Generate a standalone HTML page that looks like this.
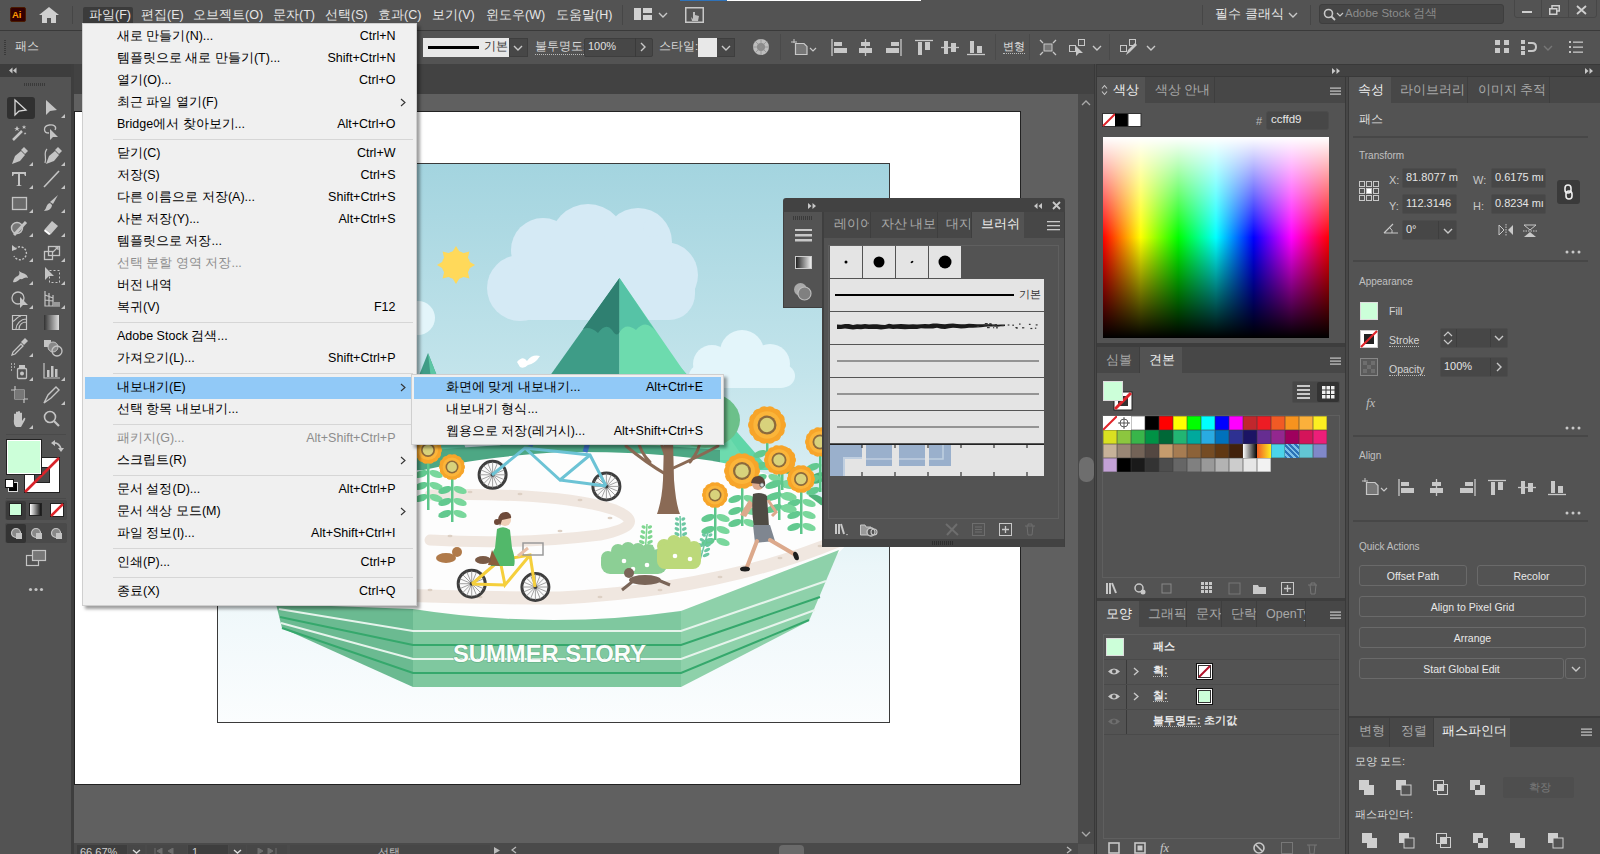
<!DOCTYPE html>
<html><head><meta charset="utf-8">
<style>
*{box-sizing:border-box;margin:0;padding:0}
html,body{width:1600px;height:854px;overflow:hidden;background:#535353;font-family:"Liberation Sans",sans-serif;color:#dcdcdc;font-size:12px}
.a{position:absolute}
.t{position:absolute;white-space:nowrap;line-height:1}
/* menu */
.menu{position:absolute;background:#f0f0f0;box-shadow:3px 3px 3px rgba(0,0,0,.38);border:1px solid #cfcfcf}
.mi{position:absolute;left:0;right:0;height:22px;color:#000;font-size:12.5px}
.mi .l{position:absolute;left:34px;top:5px;white-space:nowrap}
.mi .r{position:absolute;right:21px;top:5px;white-space:nowrap}
.mi .ar{position:absolute;right:9px;top:4px}
.mi.dis{color:#8a8a8a}
.msep{position:absolute;left:30px;right:3px;height:1px;background:#d5d5d5}
.hl{background:#91c9f7}
</style></head><body>


<!-- menu bar -->
<div class="a" style="left:0;top:0;width:1600px;height:30px;background:#535353"></div>
<div class="a" style="left:0;top:30px;width:1600px;height:1px;background:#3a3a3a"></div>
<!-- control bar -->
<div class="a" style="left:0;top:31px;width:1600px;height:33px;background:#535353"></div>
<!-- toolbar -->
<div class="a" style="left:0;top:64px;width:71px;height:790px;background:#535353"></div>
<div class="a" style="left:0;top:64px;width:71px;height:13px;background:#3d3d3d"></div>
<div class="a" style="left:71px;top:64px;width:3px;height:790px;background:#3e3e3e"></div>
<!-- doc tab strip -->
<div class="a" style="left:74px;top:64px;width:1021px;height:30px;background:#424242"></div>
<!-- pasteboard -->
<div class="a" style="left:74px;top:94px;width:1004px;height:750px;background:#606060"></div>
<!-- scrollbar v -->
<div class="a" style="left:1078px;top:94px;width:16px;height:750px;background:#4a4a4a"></div>
<!-- status bar -->
<div class="a" style="left:74px;top:844px;width:1021px;height:10px;background:#535353"></div>
<!-- artboard -->
<div class="a" style="left:74px;top:111px;width:947px;height:674px;background:#fff;border:1px solid #222"></div>
<!-- panel dividers -->
<div class="a" style="left:1094px;top:64px;width:3px;height:790px;background:#474747;border-left:1px solid #393939;border-right:1px solid #393939"></div>
<div class="a" style="left:1345px;top:77px;width:4px;height:777px;background:#474747;border-left:1px solid #393939;border-right:1px solid #3a3a3a"></div>
<div class="a" style="left:1097px;top:64px;width:248px;height:13px;background:#3d3d3d"></div>
<div class="a" style="left:1349px;top:64px;width:251px;height:13px;background:#3d3d3d"></div>


<!-- scrollbar details -->
<svg class="a" style="left:1081px;top:100px" width="10" height="6"><path d="M1,5 L5,1 L9,5" stroke="#aaa" stroke-width="1.3" fill="none"/></svg>
<svg class="a" style="left:1081px;top:831px" width="10" height="6"><path d="M1,1 L5,5 L9,1" stroke="#aaa" stroke-width="1.3" fill="none"/></svg>
<div class="a" style="left:1079px;top:457px;width:15px;height:25px;background:#6e6e6e;border-radius:7px"></div>
<!-- status bar -->
<div class="a" style="left:74px;top:843px;width:1004px;height:11px;background:#4a4a4a"></div>
<div class="a" style="left:77px;top:845px;width:50px;height:9px;background:#3e3e3e"></div>
<div class="t" style="left:80px;top:847px;font-size:11px;color:#d0d0d0">66.67%</div>
<div class="a" style="left:128px;top:845px;width:17px;height:9px;background:#474747"></div>
<div class="a" style="left:147px;top:845px;width:40px;height:9px;background:#474747"></div>
<div class="a" style="left:188px;top:845px;width:40px;height:9px;background:#3e3e3e"></div>
<div class="t" style="left:192px;top:847px;font-size:11px;color:#d0d0d0">1</div>
<div class="a" style="left:229px;top:845px;width:17px;height:9px;background:#474747"></div>
<div class="a" style="left:247px;top:845px;width:40px;height:9px;background:#474747"></div>
<div class="a" style="left:290px;top:845px;width:200px;height:9px;background:#474747"></div>
<div class="t" style="left:378px;top:847px;font-size:11px;color:#c0c0c0">선택</div>
<svg class="a" style="left:494px;top:847px" width="6" height="7"><path d="M0,0 L6,3.5 L0,7Z" fill="#bbb"/></svg>
<svg class="a" style="left:511px;top:846px" width="6" height="8"><path d="M5,1 L1,4 L5,7" stroke="#bbb" stroke-width="1.3" fill="none"/></svg>
<svg class="a" style="left:1066px;top:846px" width="6" height="8"><path d="M1,1 L5,4 L1,7" stroke="#bbb" stroke-width="1.3" fill="none"/></svg>
<div class="a" style="left:779px;top:845px;width:25px;height:9px;background:#6a6a6a;border-radius:4px 4px 0 0"></div>
<svg class="a" style="left:132px;top:849px" width="9" height="5"><path d="M1,1 L4.5,4 L8,1" stroke="#ddd" stroke-width="1.4" fill="none"/></svg>
<svg class="a" style="left:233px;top:849px" width="9" height="5"><path d="M1,1 L4.5,4 L8,1" stroke="#ddd" stroke-width="1.4" fill="none"/></svg>
<svg class="a" style="left:154px;top:848px" width="22" height="6"><path d="M1,0 L1,6 M8,0 L3,3 L8,6Z M19,0 L14,3 L19,6Z" stroke="#6e6e6e" fill="#6e6e6e"/></svg>
<svg class="a" style="left:256px;top:848px" width="22" height="6"><path d="M2,0 L7,3 L2,6Z M12,0 L17,3 L12,6Z M20,0 L20,6" stroke="#6e6e6e" fill="#6e6e6e"/></svg>
<div class="a" style="left:680px;top:0;width:47px;height:1px;background:#2f72b8"></div>
<div class="a" style="left:727px;top:0;width:194px;height:1px;background:#fff"></div>

<svg class="a" style="left:217px;top:163px" width="673" height="560" viewBox="217 163 673 560">
<defs><linearGradient id="sky" x1="0" y1="0" x2="0" y2="1">
<stop offset="0" stop-color="#a3d4df"/><stop offset="0.38" stop-color="#c3e4eb"/><stop offset="0.72" stop-color="#ebf6f9"/><stop offset="1" stop-color="#fbfdfe"/></linearGradient></defs>
<rect x="217" y="163" width="673" height="560" fill="url(#sky)"/>
<g fill="#ffd95a">
<path d="M475.0,265.0 L468.3,260.9 L468.3,269.1Z"/>
<path d="M469.4,278.4 L467.6,270.8 L461.8,276.6Z"/>
<path d="M456.0,284.0 L460.1,277.3 L451.9,277.3Z"/>
<path d="M442.6,278.4 L450.2,276.6 L444.4,270.8Z"/>
<path d="M437.0,265.0 L443.7,269.1 L443.7,260.9Z"/>
<path d="M442.6,251.6 L444.4,259.2 L450.2,253.4Z"/>
<path d="M456.0,246.0 L451.9,252.7 L460.1,252.7Z"/>
<path d="M469.4,251.6 L461.8,253.4 L467.6,259.2Z"/>
<circle cx="456" cy="265" r="14"/></g>
<g fill="#d5eaf5">
<circle cx="520" cy="288" r="33"/>
<circle cx="543" cy="250" r="32"/>
<circle cx="588" cy="242" r="38"/>
<circle cx="638" cy="242" r="34"/>
<circle cx="665" cy="275" r="33"/>
<circle cx="652" cy="228" r="9"/>
<circle cx="545" cy="290" r="30"/>
<rect x="505" y="262" width="190" height="58" rx="26"/>
</g>
<g fill="#e3f5fa">
<circle cx="712" cy="364" r="19"/>
<circle cx="742" cy="352" r="22"/>
<circle cx="770" cy="364" r="20"/>
<circle cx="700" cy="376" r="11"/>
<circle cx="784" cy="376" r="11"/>
<rect x="692" y="364" width="100" height="24" rx="11"/>
<circle cx="418" cy="318" r="17"/></g>
<polygon points="428,353 385,460 470,460" fill="#3f9c86"/>
<polygon points="428,353 470,460 440,460" fill="#5cc6a4"/>
<polygon points="670,355 560,470 770,470" fill="#5fd6a8"/>
<polygon points="619.5,278 490,460 619.5,460" fill="#3e9c87"/>
<polygon points="619.5,278 745,460 619.5,460" fill="#6ddbae"/>
<path d="M619.5,278 L583,329 Q590,326 598,333 Q606,322 612,330 Q617,338 619.5,332 Z" fill="#2f8071"/>
<path d="M619.5,278 L619.5,332 Q626,322 636,330 Q646,318 656,332 Z" fill="#56c3a6"/>
<path d="M517,362 q6,-7 10,-1 q5,-7 13,-5 q-5,8 -12,9 q-4,4 -8,2 z" fill="#fff"/>
<ellipse cx="705" cy="420" rx="35" ry="28" fill="#6cc08a"/>
<ellipse cx="640" cy="425" rx="55" ry="22" fill="#74c98f"/>
<path d="M417,452 Q560,436 720,450 L720,470 L417,470 Z" fill="#4da784"/>
<g fill="#4fb27a"><ellipse cx="818" cy="478" rx="9" ry="5" transform="rotate(-20 818 478)"/><ellipse cx="816" cy="500" rx="9" ry="5" transform="rotate(20 816 500)"/><ellipse cx="790" cy="470" rx="8" ry="4"/></g>
<path d="M260,600 Q270,470 560,452 Q740,450 800,490 Q845,520 850,540 Q800,610 560,622 Q330,625 260,600 Z" fill="#fdfdfd"/>
<path d="M430,495 Q560,492 615,510 Q650,525 600,535 Q520,545 430,540" fill="none" stroke="#f0e7e0" stroke-width="11" stroke-linecap="round"/>
<path d="M300,590 Q420,598 560,598 Q720,590 840,540" fill="none" stroke="#f0e7e0" stroke-width="13"/>
<ellipse cx="470" cy="492" rx="2.5" ry="1.2" fill="#ddd0c4"/><ellipse cx="520" cy="494" rx="2.5" ry="1.2" fill="#ddd0c4"/><ellipse cx="580" cy="500" rx="2.5" ry="1.2" fill="#ddd0c4"/><ellipse cx="610" cy="518" rx="2.5" ry="1.2" fill="#ddd0c4"/><ellipse cx="560" cy="531" rx="2.5" ry="1.2" fill="#ddd0c4"/><ellipse cx="500" cy="535" rx="2.5" ry="1.2" fill="#ddd0c4"/><ellipse cx="450" cy="536" rx="2.5" ry="1.2" fill="#ddd0c4"/><ellipse cx="430" cy="590" rx="2.5" ry="1.2" fill="#ddd0c4"/><ellipse cx="480" cy="597" rx="2.5" ry="1.2" fill="#ddd0c4"/><ellipse cx="540" cy="598" rx="2.5" ry="1.2" fill="#ddd0c4"/><ellipse cx="600" cy="597" rx="2.5" ry="1.2" fill="#ddd0c4"/><ellipse cx="660" cy="590" rx="2.5" ry="1.2" fill="#ddd0c4"/><ellipse cx="720" cy="577" rx="2.5" ry="1.2" fill="#ddd0c4"/><ellipse cx="780" cy="558" rx="2.5" ry="1.2" fill="#ddd0c4"/><ellipse cx="820" cy="546" rx="2.5" ry="1.2" fill="#ddd0c4"/>
<path d="M664,440 L673,440 L674,480 Q676,505 680,514 L657,514 Q662,500 663,480 Z" fill="#8a6a55"/>
<path d="M667,475 Q645,462 626,446 M669,470 Q700,456 718,446 M650,462 Q640,452 638,440 M690,462 Q700,450 700,440 M668,462 L660,440" stroke="#8a6a55" stroke-width="3" fill="none" stroke-linecap="round"/>
<rect x="427" y="462" width="2.5" height="48" fill="#5cc68a"/><ellipse cx="421" cy="474" rx="7" ry="3.5" fill="#62c98f" transform="rotate(-20 421 474)"/><ellipse cx="436" cy="474" rx="7" ry="3.5" fill="#79d79c" transform="rotate(20 436 474)"/><ellipse cx="421" cy="486" rx="7" ry="3.5" fill="#62c98f" transform="rotate(-20 421 486)"/><ellipse cx="436" cy="486" rx="7" ry="3.5" fill="#79d79c" transform="rotate(20 436 486)"/><ellipse cx="421" cy="498" rx="7" ry="3.5" fill="#62c98f" transform="rotate(-20 421 498)"/><ellipse cx="436" cy="498" rx="7" ry="3.5" fill="#79d79c" transform="rotate(20 436 498)"/>
<rect x="451" y="478" width="2.5" height="44" fill="#5cc68a"/><ellipse cx="445" cy="490" rx="7" ry="3.5" fill="#62c98f" transform="rotate(-20 445 490)"/><ellipse cx="460" cy="490" rx="7" ry="3.5" fill="#79d79c" transform="rotate(20 460 490)"/><ellipse cx="445" cy="502" rx="7" ry="3.5" fill="#62c98f" transform="rotate(-20 445 502)"/><ellipse cx="460" cy="502" rx="7" ry="3.5" fill="#79d79c" transform="rotate(20 460 502)"/><ellipse cx="445" cy="514" rx="7" ry="3.5" fill="#62c98f" transform="rotate(-20 445 514)"/><ellipse cx="460" cy="514" rx="7" ry="3.5" fill="#79d79c" transform="rotate(20 460 514)"/>
<rect x="741" y="487" width="2.5" height="39" fill="#5cc68a"/><ellipse cx="735" cy="499" rx="7" ry="3.5" fill="#62c98f" transform="rotate(-20 735 499)"/><ellipse cx="750" cy="499" rx="7" ry="3.5" fill="#79d79c" transform="rotate(20 750 499)"/><ellipse cx="735" cy="511" rx="7" ry="3.5" fill="#62c98f" transform="rotate(-20 735 511)"/><ellipse cx="750" cy="511" rx="7" ry="3.5" fill="#79d79c" transform="rotate(20 750 511)"/><ellipse cx="735" cy="523" rx="7" ry="3.5" fill="#62c98f" transform="rotate(-20 735 523)"/><ellipse cx="750" cy="523" rx="7" ry="3.5" fill="#79d79c" transform="rotate(20 750 523)"/>
<rect x="778" y="473" width="2.5" height="47" fill="#5cc68a"/><ellipse cx="772" cy="485" rx="7" ry="3.5" fill="#62c98f" transform="rotate(-20 772 485)"/><ellipse cx="787" cy="485" rx="7" ry="3.5" fill="#79d79c" transform="rotate(20 787 485)"/><ellipse cx="772" cy="497" rx="7" ry="3.5" fill="#62c98f" transform="rotate(-20 772 497)"/><ellipse cx="787" cy="497" rx="7" ry="3.5" fill="#79d79c" transform="rotate(20 787 497)"/><ellipse cx="772" cy="509" rx="7" ry="3.5" fill="#62c98f" transform="rotate(-20 772 509)"/><ellipse cx="787" cy="509" rx="7" ry="3.5" fill="#79d79c" transform="rotate(20 787 509)"/>
<rect x="800" y="491" width="2.5" height="43" fill="#5cc68a"/><ellipse cx="794" cy="503" rx="7" ry="3.5" fill="#62c98f" transform="rotate(-20 794 503)"/><ellipse cx="809" cy="503" rx="7" ry="3.5" fill="#79d79c" transform="rotate(20 809 503)"/><ellipse cx="794" cy="515" rx="7" ry="3.5" fill="#62c98f" transform="rotate(-20 794 515)"/><ellipse cx="809" cy="515" rx="7" ry="3.5" fill="#79d79c" transform="rotate(20 809 515)"/><ellipse cx="794" cy="527" rx="7" ry="3.5" fill="#62c98f" transform="rotate(-20 794 527)"/><ellipse cx="809" cy="527" rx="7" ry="3.5" fill="#79d79c" transform="rotate(20 809 527)"/>
<rect x="714" y="506" width="2.5" height="34" fill="#5cc68a"/><ellipse cx="708" cy="518" rx="7" ry="3.5" fill="#62c98f" transform="rotate(-20 708 518)"/><ellipse cx="723" cy="518" rx="7" ry="3.5" fill="#79d79c" transform="rotate(20 723 518)"/><ellipse cx="708" cy="530" rx="7" ry="3.5" fill="#62c98f" transform="rotate(-20 708 530)"/><ellipse cx="723" cy="530" rx="7" ry="3.5" fill="#79d79c" transform="rotate(20 723 530)"/><ellipse cx="708" cy="542" rx="7" ry="3.5" fill="#62c98f" transform="rotate(-20 708 542)"/><ellipse cx="723" cy="542" rx="7" ry="3.5" fill="#79d79c" transform="rotate(20 723 542)"/>
<rect x="766" y="442" width="2.5" height="23" fill="#5cc68a"/><ellipse cx="760" cy="454" rx="7" ry="3.5" fill="#62c98f" transform="rotate(-20 760 454)"/><ellipse cx="775" cy="454" rx="7" ry="3.5" fill="#79d79c" transform="rotate(20 775 454)"/><ellipse cx="760" cy="466" rx="7" ry="3.5" fill="#62c98f" transform="rotate(-20 760 466)"/><ellipse cx="775" cy="466" rx="7" ry="3.5" fill="#79d79c" transform="rotate(20 775 466)"/><ellipse cx="760" cy="478" rx="7" ry="3.5" fill="#62c98f" transform="rotate(-20 760 478)"/><ellipse cx="775" cy="478" rx="7" ry="3.5" fill="#79d79c" transform="rotate(20 775 478)"/>
<rect x="819" y="455" width="2.5" height="37" fill="#5cc68a"/><ellipse cx="813" cy="467" rx="7" ry="3.5" fill="#62c98f" transform="rotate(-20 813 467)"/><ellipse cx="828" cy="467" rx="7" ry="3.5" fill="#79d79c" transform="rotate(20 828 467)"/><ellipse cx="813" cy="479" rx="7" ry="3.5" fill="#62c98f" transform="rotate(-20 813 479)"/><ellipse cx="828" cy="479" rx="7" ry="3.5" fill="#79d79c" transform="rotate(20 828 479)"/><ellipse cx="813" cy="491" rx="7" ry="3.5" fill="#62c98f" transform="rotate(-20 813 491)"/><ellipse cx="828" cy="491" rx="7" ry="3.5" fill="#79d79c" transform="rotate(20 828 491)"/>
<rect x="781" y="472" width="2.5" height="18" fill="#5cc68a"/><ellipse cx="775" cy="484" rx="7" ry="3.5" fill="#62c98f" transform="rotate(-20 775 484)"/><ellipse cx="790" cy="484" rx="7" ry="3.5" fill="#79d79c" transform="rotate(20 790 484)"/><ellipse cx="775" cy="496" rx="7" ry="3.5" fill="#62c98f" transform="rotate(-20 775 496)"/><ellipse cx="790" cy="496" rx="7" ry="3.5" fill="#79d79c" transform="rotate(20 790 496)"/><ellipse cx="775" cy="508" rx="7" ry="3.5" fill="#62c98f" transform="rotate(-20 775 508)"/><ellipse cx="790" cy="508" rx="7" ry="3.5" fill="#79d79c" transform="rotate(20 790 508)"/>
<circle cx="437.5" cy="450.0" r="4.5" fill="#f7a52a"/><circle cx="436.6" cy="454.1" r="4.5" fill="#f7a52a"/><circle cx="433.9" cy="457.4" r="4.5" fill="#f7a52a"/><circle cx="430.1" cy="459.3" r="4.5" fill="#f7a52a"/><circle cx="425.9" cy="459.3" r="4.5" fill="#f7a52a"/><circle cx="422.1" cy="457.4" r="4.5" fill="#f7a52a"/><circle cx="419.4" cy="454.1" r="4.5" fill="#f7a52a"/><circle cx="418.5" cy="450.0" r="4.5" fill="#f7a52a"/><circle cx="419.4" cy="445.9" r="4.5" fill="#f7a52a"/><circle cx="422.1" cy="442.6" r="4.5" fill="#f7a52a"/><circle cx="425.9" cy="440.7" r="4.5" fill="#f7a52a"/><circle cx="430.1" cy="440.7" r="4.5" fill="#f7a52a"/><circle cx="433.9" cy="442.6" r="4.5" fill="#f7a52a"/><circle cx="436.6" cy="445.9" r="4.5" fill="#f7a52a"/><circle cx="428" cy="450" r="10.1" fill="#fbb53a"/><circle cx="428" cy="450" r="7.0" fill="#8c6a3c"/><circle cx="428" cy="450" r="5.3" fill="#d8d27c"/>
<circle cx="460.8" cy="467.0" r="4.2" fill="#f7a52a"/><circle cx="460.0" cy="470.8" r="4.2" fill="#f7a52a"/><circle cx="457.5" cy="473.9" r="4.2" fill="#f7a52a"/><circle cx="454.0" cy="475.6" r="4.2" fill="#f7a52a"/><circle cx="450.0" cy="475.6" r="4.2" fill="#f7a52a"/><circle cx="446.5" cy="473.9" r="4.2" fill="#f7a52a"/><circle cx="444.0" cy="470.8" r="4.2" fill="#f7a52a"/><circle cx="443.2" cy="467.0" r="4.2" fill="#f7a52a"/><circle cx="444.0" cy="463.2" r="4.2" fill="#f7a52a"/><circle cx="446.5" cy="460.1" r="4.2" fill="#f7a52a"/><circle cx="450.0" cy="458.4" r="4.2" fill="#f7a52a"/><circle cx="454.0" cy="458.4" r="4.2" fill="#f7a52a"/><circle cx="457.5" cy="460.1" r="4.2" fill="#f7a52a"/><circle cx="460.0" cy="463.2" r="4.2" fill="#f7a52a"/><circle cx="452" cy="467" r="9.4" fill="#fbb53a"/><circle cx="452" cy="467" r="6.5" fill="#8c6a3c"/><circle cx="452" cy="467" r="4.9" fill="#d8d27c"/>
<circle cx="779.9" cy="425.0" r="6.1" fill="#f7a52a"/><circle cx="778.6" cy="430.6" r="6.1" fill="#f7a52a"/><circle cx="775.1" cy="435.1" r="6.1" fill="#f7a52a"/><circle cx="769.9" cy="437.6" r="6.1" fill="#f7a52a"/><circle cx="764.1" cy="437.6" r="6.1" fill="#f7a52a"/><circle cx="758.9" cy="435.1" r="6.1" fill="#f7a52a"/><circle cx="755.4" cy="430.6" r="6.1" fill="#f7a52a"/><circle cx="754.1" cy="425.0" r="6.1" fill="#f7a52a"/><circle cx="755.4" cy="419.4" r="6.1" fill="#f7a52a"/><circle cx="758.9" cy="414.9" r="6.1" fill="#f7a52a"/><circle cx="764.1" cy="412.4" r="6.1" fill="#f7a52a"/><circle cx="769.9" cy="412.4" r="6.1" fill="#f7a52a"/><circle cx="775.1" cy="414.9" r="6.1" fill="#f7a52a"/><circle cx="778.6" cy="419.4" r="6.1" fill="#f7a52a"/><circle cx="767" cy="425" r="13.7" fill="#fbb53a"/><circle cx="767" cy="425" r="9.5" fill="#8c6a3c"/><circle cx="767" cy="425" r="7.2" fill="#d8d27c"/>
<circle cx="830.2" cy="442.0" r="4.8" fill="#f7a52a"/><circle cx="829.2" cy="446.4" r="4.8" fill="#f7a52a"/><circle cx="826.4" cy="450.0" r="4.8" fill="#f7a52a"/><circle cx="822.3" cy="451.9" r="4.8" fill="#f7a52a"/><circle cx="817.7" cy="451.9" r="4.8" fill="#f7a52a"/><circle cx="813.6" cy="450.0" r="4.8" fill="#f7a52a"/><circle cx="810.8" cy="446.4" r="4.8" fill="#f7a52a"/><circle cx="809.8" cy="442.0" r="4.8" fill="#f7a52a"/><circle cx="810.8" cy="437.6" r="4.8" fill="#f7a52a"/><circle cx="813.6" cy="434.0" r="4.8" fill="#f7a52a"/><circle cx="817.7" cy="432.1" r="4.8" fill="#f7a52a"/><circle cx="822.3" cy="432.1" r="4.8" fill="#f7a52a"/><circle cx="826.4" cy="434.0" r="4.8" fill="#f7a52a"/><circle cx="829.2" cy="437.6" r="4.8" fill="#f7a52a"/><circle cx="820" cy="442" r="10.8" fill="#fbb53a"/><circle cx="820" cy="442" r="7.5" fill="#8c6a3c"/><circle cx="820" cy="442" r="5.7" fill="#d8d27c"/>
<circle cx="791.5" cy="460.0" r="4.5" fill="#f7a52a"/><circle cx="790.6" cy="464.1" r="4.5" fill="#f7a52a"/><circle cx="787.9" cy="467.4" r="4.5" fill="#f7a52a"/><circle cx="784.1" cy="469.3" r="4.5" fill="#f7a52a"/><circle cx="779.9" cy="469.3" r="4.5" fill="#f7a52a"/><circle cx="776.1" cy="467.4" r="4.5" fill="#f7a52a"/><circle cx="773.4" cy="464.1" r="4.5" fill="#f7a52a"/><circle cx="772.5" cy="460.0" r="4.5" fill="#f7a52a"/><circle cx="773.4" cy="455.9" r="4.5" fill="#f7a52a"/><circle cx="776.1" cy="452.6" r="4.5" fill="#f7a52a"/><circle cx="779.9" cy="450.7" r="4.5" fill="#f7a52a"/><circle cx="784.1" cy="450.7" r="4.5" fill="#f7a52a"/><circle cx="787.9" cy="452.6" r="4.5" fill="#f7a52a"/><circle cx="790.6" cy="455.9" r="4.5" fill="#f7a52a"/><circle cx="782" cy="460" r="10.1" fill="#fbb53a"/><circle cx="782" cy="460" r="7.0" fill="#8c6a3c"/><circle cx="782" cy="460" r="5.3" fill="#d8d27c"/>
<circle cx="754.2" cy="471.0" r="5.8" fill="#f7a52a"/><circle cx="753.0" cy="476.3" r="5.8" fill="#f7a52a"/><circle cx="749.6" cy="480.6" r="5.8" fill="#f7a52a"/><circle cx="744.7" cy="482.9" r="5.8" fill="#f7a52a"/><circle cx="739.3" cy="482.9" r="5.8" fill="#f7a52a"/><circle cx="734.4" cy="480.6" r="5.8" fill="#f7a52a"/><circle cx="731.0" cy="476.3" r="5.8" fill="#f7a52a"/><circle cx="729.8" cy="471.0" r="5.8" fill="#f7a52a"/><circle cx="731.0" cy="465.7" r="5.8" fill="#f7a52a"/><circle cx="734.4" cy="461.4" r="5.8" fill="#f7a52a"/><circle cx="739.3" cy="459.1" r="5.8" fill="#f7a52a"/><circle cx="744.7" cy="459.1" r="5.8" fill="#f7a52a"/><circle cx="749.6" cy="461.4" r="5.8" fill="#f7a52a"/><circle cx="753.0" cy="465.7" r="5.8" fill="#f7a52a"/><circle cx="742" cy="471" r="13.0" fill="#fbb53a"/><circle cx="742" cy="471" r="9.0" fill="#8c6a3c"/><circle cx="742" cy="471" r="6.8" fill="#d8d27c"/>
<circle cx="789.2" cy="460.0" r="4.8" fill="#f7a52a"/><circle cx="788.2" cy="464.4" r="4.8" fill="#f7a52a"/><circle cx="785.4" cy="468.0" r="4.8" fill="#f7a52a"/><circle cx="781.3" cy="469.9" r="4.8" fill="#f7a52a"/><circle cx="776.7" cy="469.9" r="4.8" fill="#f7a52a"/><circle cx="772.6" cy="468.0" r="4.8" fill="#f7a52a"/><circle cx="769.8" cy="464.4" r="4.8" fill="#f7a52a"/><circle cx="768.8" cy="460.0" r="4.8" fill="#f7a52a"/><circle cx="769.8" cy="455.6" r="4.8" fill="#f7a52a"/><circle cx="772.6" cy="452.0" r="4.8" fill="#f7a52a"/><circle cx="776.7" cy="450.1" r="4.8" fill="#f7a52a"/><circle cx="781.3" cy="450.1" r="4.8" fill="#f7a52a"/><circle cx="785.4" cy="452.0" r="4.8" fill="#f7a52a"/><circle cx="788.2" cy="455.6" r="4.8" fill="#f7a52a"/><circle cx="779" cy="460" r="10.8" fill="#fbb53a"/><circle cx="779" cy="460" r="7.5" fill="#8c6a3c"/><circle cx="779" cy="460" r="5.7" fill="#d8d27c"/>
<circle cx="810.5" cy="479.0" r="4.5" fill="#f7a52a"/><circle cx="809.6" cy="483.1" r="4.5" fill="#f7a52a"/><circle cx="806.9" cy="486.4" r="4.5" fill="#f7a52a"/><circle cx="803.1" cy="488.3" r="4.5" fill="#f7a52a"/><circle cx="798.9" cy="488.3" r="4.5" fill="#f7a52a"/><circle cx="795.1" cy="486.4" r="4.5" fill="#f7a52a"/><circle cx="792.4" cy="483.1" r="4.5" fill="#f7a52a"/><circle cx="791.5" cy="479.0" r="4.5" fill="#f7a52a"/><circle cx="792.4" cy="474.9" r="4.5" fill="#f7a52a"/><circle cx="795.1" cy="471.6" r="4.5" fill="#f7a52a"/><circle cx="798.9" cy="469.7" r="4.5" fill="#f7a52a"/><circle cx="803.1" cy="469.7" r="4.5" fill="#f7a52a"/><circle cx="806.9" cy="471.6" r="4.5" fill="#f7a52a"/><circle cx="809.6" cy="474.9" r="4.5" fill="#f7a52a"/><circle cx="801" cy="479" r="10.1" fill="#fbb53a"/><circle cx="801" cy="479" r="7.0" fill="#8c6a3c"/><circle cx="801" cy="479" r="5.3" fill="#d8d27c"/>
<circle cx="723.8" cy="495.0" r="4.2" fill="#f7a52a"/><circle cx="723.0" cy="498.8" r="4.2" fill="#f7a52a"/><circle cx="720.5" cy="501.9" r="4.2" fill="#f7a52a"/><circle cx="717.0" cy="503.6" r="4.2" fill="#f7a52a"/><circle cx="713.0" cy="503.6" r="4.2" fill="#f7a52a"/><circle cx="709.5" cy="501.9" r="4.2" fill="#f7a52a"/><circle cx="707.0" cy="498.8" r="4.2" fill="#f7a52a"/><circle cx="706.2" cy="495.0" r="4.2" fill="#f7a52a"/><circle cx="707.0" cy="491.2" r="4.2" fill="#f7a52a"/><circle cx="709.5" cy="488.1" r="4.2" fill="#f7a52a"/><circle cx="713.0" cy="486.4" r="4.2" fill="#f7a52a"/><circle cx="717.0" cy="486.4" r="4.2" fill="#f7a52a"/><circle cx="720.5" cy="488.1" r="4.2" fill="#f7a52a"/><circle cx="723.0" cy="491.2" r="4.2" fill="#f7a52a"/><circle cx="715" cy="495" r="9.4" fill="#fbb53a"/><circle cx="715" cy="495" r="6.5" fill="#8c6a3c"/><circle cx="715" cy="495" r="4.9" fill="#d8d27c"/>
<path d="M645,556 Q646.0,540.0 647,524" stroke="#7fd690" stroke-width="1.5" fill="none"/><ellipse cx="643.6" cy="527.0" rx="2.2" ry="1.6" fill="#7fd690" transform="rotate(25 643.6 527.0)"/><ellipse cx="650.0" cy="527.0" rx="2.2" ry="1.6" fill="#7fd690" transform="rotate(-25 650.0 527.0)"/><ellipse cx="643.0" cy="532.0" rx="2.5" ry="1.6" fill="#7fd690" transform="rotate(25 643.0 532.0)"/><ellipse cx="650.0" cy="532.0" rx="2.5" ry="1.6" fill="#7fd690" transform="rotate(-25 650.0 532.0)"/><ellipse cx="642.4" cy="537.0" rx="2.8" ry="1.6" fill="#7fd690" transform="rotate(25 642.4 537.0)"/><ellipse cx="650.0" cy="537.0" rx="2.8" ry="1.6" fill="#7fd690" transform="rotate(-25 650.0 537.0)"/><ellipse cx="641.8" cy="542.0" rx="3.1" ry="1.6" fill="#7fd690" transform="rotate(25 641.8 542.0)"/><ellipse cx="650.0" cy="542.0" rx="3.1" ry="1.6" fill="#7fd690" transform="rotate(-25 650.0 542.0)"/><ellipse cx="641.1" cy="547.0" rx="3.4" ry="1.6" fill="#7fd690" transform="rotate(25 641.1 547.0)"/><ellipse cx="650.0" cy="547.0" rx="3.4" ry="1.6" fill="#7fd690" transform="rotate(-25 650.0 547.0)"/><ellipse cx="640.5" cy="552.0" rx="3.8" ry="1.6" fill="#7fd690" transform="rotate(25 640.5 552.0)"/><ellipse cx="650.0" cy="552.0" rx="3.8" ry="1.6" fill="#7fd690" transform="rotate(-25 650.0 552.0)"/>
<path d="M682,560 Q681.0,538.0 680,516" stroke="#6cc7a2" stroke-width="1.5" fill="none"/><ellipse cx="677.0" cy="519.0" rx="2.1" ry="1.6" fill="#6cc7a2" transform="rotate(25 677.0 519.0)"/><ellipse cx="683.3" cy="519.0" rx="2.1" ry="1.6" fill="#6cc7a2" transform="rotate(-25 683.3 519.0)"/><ellipse cx="677.0" cy="524.0" rx="2.4" ry="1.6" fill="#6cc7a2" transform="rotate(25 677.0 524.0)"/><ellipse cx="683.7" cy="524.0" rx="2.4" ry="1.6" fill="#6cc7a2" transform="rotate(-25 683.7 524.0)"/><ellipse cx="677.0" cy="529.0" rx="2.6" ry="1.6" fill="#6cc7a2" transform="rotate(25 677.0 529.0)"/><ellipse cx="684.2" cy="529.0" rx="2.6" ry="1.6" fill="#6cc7a2" transform="rotate(-25 684.2 529.0)"/><ellipse cx="677.0" cy="534.0" rx="2.8" ry="1.6" fill="#6cc7a2" transform="rotate(25 677.0 534.0)"/><ellipse cx="684.6" cy="534.0" rx="2.8" ry="1.6" fill="#6cc7a2" transform="rotate(-25 684.6 534.0)"/><ellipse cx="677.0" cy="539.0" rx="3.0" ry="1.6" fill="#6cc7a2" transform="rotate(25 677.0 539.0)"/><ellipse cx="685.1" cy="539.0" rx="3.0" ry="1.6" fill="#6cc7a2" transform="rotate(-25 685.1 539.0)"/><ellipse cx="677.0" cy="544.0" rx="3.3" ry="1.6" fill="#6cc7a2" transform="rotate(25 677.0 544.0)"/><ellipse cx="685.5" cy="544.0" rx="3.3" ry="1.6" fill="#6cc7a2" transform="rotate(-25 685.5 544.0)"/><ellipse cx="677.0" cy="549.0" rx="3.5" ry="1.6" fill="#6cc7a2" transform="rotate(25 677.0 549.0)"/><ellipse cx="686.0" cy="549.0" rx="3.5" ry="1.6" fill="#6cc7a2" transform="rotate(-25 686.0 549.0)"/><ellipse cx="677.0" cy="554.0" rx="3.7" ry="1.6" fill="#6cc7a2" transform="rotate(25 677.0 554.0)"/><ellipse cx="686.5" cy="554.0" rx="3.7" ry="1.6" fill="#6cc7a2" transform="rotate(-25 686.5 554.0)"/>
<path d="M700,560 Q704.0,546.0 708,532" stroke="#6cc7a2" stroke-width="1.5" fill="none"/><ellipse cx="703.9" cy="535.0" rx="2.2" ry="1.6" fill="#6cc7a2" transform="rotate(25 703.9 535.0)"/><ellipse cx="710.4" cy="535.0" rx="2.2" ry="1.6" fill="#6cc7a2" transform="rotate(-25 710.4 535.0)"/><ellipse cx="702.1" cy="540.0" rx="2.6" ry="1.6" fill="#6cc7a2" transform="rotate(25 702.1 540.0)"/><ellipse cx="709.3" cy="540.0" rx="2.6" ry="1.6" fill="#6cc7a2" transform="rotate(-25 709.3 540.0)"/><ellipse cx="700.4" cy="545.0" rx="2.9" ry="1.6" fill="#6cc7a2" transform="rotate(25 700.4 545.0)"/><ellipse cx="708.2" cy="545.0" rx="2.9" ry="1.6" fill="#6cc7a2" transform="rotate(-25 708.2 545.0)"/><ellipse cx="698.6" cy="550.0" rx="3.3" ry="1.6" fill="#6cc7a2" transform="rotate(25 698.6 550.0)"/><ellipse cx="707.1" cy="550.0" rx="3.3" ry="1.6" fill="#6cc7a2" transform="rotate(-25 707.1 550.0)"/><ellipse cx="696.8" cy="555.0" rx="3.6" ry="1.6" fill="#6cc7a2" transform="rotate(25 696.8 555.0)"/><ellipse cx="706.1" cy="555.0" rx="3.6" ry="1.6" fill="#6cc7a2" transform="rotate(-25 706.1 555.0)"/>
<g fill="#8ccf95"><circle cx="608" cy="558" r="7"/><circle cx="618" cy="551" r="7"/><circle cx="628" cy="549" r="7"/><circle cx="638" cy="550" r="7"/><circle cx="648" cy="551" r="7"/><circle cx="658" cy="556" r="7"/><circle cx="663" cy="564" r="6"/><rect x="601" y="552" width="66" height="22" rx="9"/></g>
<g fill="#bcd97a"><circle cx="664" cy="546" r="7"/><circle cx="674" cy="542" r="7"/><circle cx="684" cy="543" r="7"/><circle cx="694" cy="548" r="7"/><rect x="657" y="544" width="44" height="25" rx="8"/></g>
<circle cx="624" cy="561" r="2.3" fill="#fff"/><circle cx="647" cy="565" r="2.3" fill="#fff"/><circle cx="633" cy="569" r="2.3" fill="#fff"/><circle cx="675" cy="556" r="2.3" fill="#fff"/><circle cx="690" cy="559" r="2.3" fill="#fff"/>
<circle cx="492.6" cy="474.8" r="13.5" fill="#fafafa" stroke="#3e3e3e" stroke-width="3"/><line x1="505.6" y1="474.8" x2="479.6" y2="474.8" stroke="#8a8a8a" stroke-width="0.8"/><line x1="504.6" y1="479.8" x2="480.6" y2="469.8" stroke="#8a8a8a" stroke-width="0.8"/><line x1="501.8" y1="484.0" x2="483.4" y2="465.6" stroke="#8a8a8a" stroke-width="0.8"/><line x1="497.6" y1="486.8" x2="487.6" y2="462.8" stroke="#8a8a8a" stroke-width="0.8"/><line x1="492.6" y1="487.8" x2="492.6" y2="461.8" stroke="#8a8a8a" stroke-width="0.8"/><line x1="487.6" y1="486.8" x2="497.6" y2="462.8" stroke="#8a8a8a" stroke-width="0.8"/><line x1="483.4" y1="484.0" x2="501.8" y2="465.6" stroke="#8a8a8a" stroke-width="0.8"/><line x1="480.6" y1="479.8" x2="504.6" y2="469.8" stroke="#8a8a8a" stroke-width="0.8"/><circle cx="492.6" cy="474.8" r="2" fill="#3e3e3e"/><circle cx="606.4" cy="486.4" r="13.5" fill="#fafafa" stroke="#3e3e3e" stroke-width="3"/><line x1="619.4" y1="486.4" x2="593.4" y2="486.4" stroke="#8a8a8a" stroke-width="0.8"/><line x1="618.4" y1="491.4" x2="594.4" y2="481.4" stroke="#8a8a8a" stroke-width="0.8"/><line x1="615.6" y1="495.6" x2="597.2" y2="477.2" stroke="#8a8a8a" stroke-width="0.8"/><line x1="611.4" y1="498.4" x2="601.4" y2="474.4" stroke="#8a8a8a" stroke-width="0.8"/><line x1="606.4" y1="499.4" x2="606.4" y2="473.4" stroke="#8a8a8a" stroke-width="0.8"/><line x1="601.4" y1="498.4" x2="611.4" y2="474.4" stroke="#8a8a8a" stroke-width="0.8"/><line x1="597.2" y1="495.6" x2="615.6" y2="477.2" stroke="#8a8a8a" stroke-width="0.8"/><line x1="594.4" y1="491.4" x2="618.4" y2="481.4" stroke="#8a8a8a" stroke-width="0.8"/><circle cx="606.4" cy="486.4" r="2" fill="#3e3e3e"/>
<path d="M492,475 L525,448 L590,455 L606,486 M525,448 L560,480 L590,455 M560,480 L606,486" stroke="#6cc3d5" stroke-width="3" fill="none"/>
<path d="M530,446 L540,420 M585,452 L592,430" stroke="#3b6fc2" stroke-width="5"/>
<ellipse cx="592" cy="427" rx="10" ry="6" fill="#f2a2c4"/>
<circle cx="471.7" cy="583.7" r="13.5" fill="#fafafa" stroke="#3e3e3e" stroke-width="3"/><line x1="484.7" y1="583.7" x2="458.7" y2="583.7" stroke="#8a8a8a" stroke-width="0.8"/><line x1="483.7" y1="588.7" x2="459.7" y2="578.7" stroke="#8a8a8a" stroke-width="0.8"/><line x1="480.9" y1="592.9" x2="462.5" y2="574.5" stroke="#8a8a8a" stroke-width="0.8"/><line x1="476.7" y1="595.7" x2="466.7" y2="571.7" stroke="#8a8a8a" stroke-width="0.8"/><line x1="471.7" y1="596.7" x2="471.7" y2="570.7" stroke="#8a8a8a" stroke-width="0.8"/><line x1="466.7" y1="595.7" x2="476.7" y2="571.7" stroke="#8a8a8a" stroke-width="0.8"/><line x1="462.5" y1="592.9" x2="480.9" y2="574.5" stroke="#8a8a8a" stroke-width="0.8"/><line x1="459.7" y1="588.7" x2="483.7" y2="578.7" stroke="#8a8a8a" stroke-width="0.8"/><circle cx="471.7" cy="583.7" r="2" fill="#3e3e3e"/><circle cx="535.4" cy="587" r="13.5" fill="#fafafa" stroke="#3e3e3e" stroke-width="3"/><line x1="548.4" y1="587.0" x2="522.4" y2="587.0" stroke="#8a8a8a" stroke-width="0.8"/><line x1="547.4" y1="592.0" x2="523.4" y2="582.0" stroke="#8a8a8a" stroke-width="0.8"/><line x1="544.6" y1="596.2" x2="526.2" y2="577.8" stroke="#8a8a8a" stroke-width="0.8"/><line x1="540.4" y1="599.0" x2="530.4" y2="575.0" stroke="#8a8a8a" stroke-width="0.8"/><line x1="535.4" y1="600.0" x2="535.4" y2="574.0" stroke="#8a8a8a" stroke-width="0.8"/><line x1="530.4" y1="599.0" x2="540.4" y2="575.0" stroke="#8a8a8a" stroke-width="0.8"/><line x1="526.2" y1="596.2" x2="544.6" y2="577.8" stroke="#8a8a8a" stroke-width="0.8"/><line x1="523.4" y1="592.0" x2="547.4" y2="582.0" stroke="#8a8a8a" stroke-width="0.8"/><circle cx="535.4" cy="587" r="2" fill="#3e3e3e"/>
<path d="M472,584 L500,560 L530,555 L535,587 M500,560 L505,585 L530,555 M472,584 L505,585" stroke="#f5cf3c" stroke-width="3" fill="none"/>
<rect x="523" y="543" width="20" height="12" fill="none" stroke="#9a9a9a" stroke-width="1.5"/>
<path d="M497,529 Q504,525 510,530 L512,548 Q516,560 514,566 L491,566 Q490,556 495,548 Z" fill="#52b86a"/>
<circle cx="505" cy="520" r="6" fill="#f0d0b8"/><path d="M498,520 Q499,511 507,512 Q512,514 511,518 L502,520 L500,526Z" fill="#6e4a3a"/><circle cx="497" cy="522" r="3" fill="#6e4a3a"/>
<path d="M492,550 L488,565 L500,566 Z" fill="#8b5e3c"/><ellipse cx="483" cy="560" rx="8" ry="4" fill="#7a5a46"/>
<path d="M518,556 L528,548" stroke="#e8c0a8" stroke-width="3"/>
<ellipse cx="446" cy="558" rx="10" ry="5" fill="#b07a4a"/><circle cx="457" cy="552" r="5" fill="#b07a4a"/>
<path d="M749,500 L740,515 L746,517 L754,504Z" fill="#dca98c"/>
<path d="M753,494 Q761,491 767,496 L769,527 L754,527 Q751,510 753,494 Z" fill="#4f4b44"/>
<path d="M768,500 L776,512 L772,516" stroke="#dca98c" stroke-width="3" fill="none"/>
<path d="M753,525 L770,525 L775,541 L755,543 Z" fill="#7f8690"/>
<path d="M757,541 L747,567 M770,540 L794,554" stroke="#dca98c" stroke-width="4" stroke-linecap="round"/>
<ellipse cx="745" cy="569" rx="5" ry="2.5" fill="#1e1e1e"/><ellipse cx="796" cy="556" rx="2.5" ry="4.5" fill="#1e1e1e" transform="rotate(-20 796 556)"/>
<circle cx="758" cy="484" r="6" fill="#dca98c"/><path d="M751,483 Q752,475 760,476 Q766,478 765,486 L760,484Z" fill="#5a4438"/><circle cx="762" cy="485" r="2.2" fill="#ddd" stroke="#444" stroke-width="0.8"/>
<ellipse cx="645" cy="580" rx="16" ry="5" fill="#7a6558"/><circle cx="629" cy="573" r="5" fill="#7a6558"/><path d="M632,582 l-10,8 M658,580 l12,5" stroke="#7a6558" stroke-width="3"/>
<polygon points="276,604 413,609 413,687 282,628" fill="#6bba91"/>
<path d="M413,609 Q547,630 681,611 L681,687 L413,687 Z" fill="#7fc89f"/>
<polygon points="681,611 839,550 809,621 681,687" fill="#8ed1aa"/>
<g stroke-width="2" fill="none">
<path d="M279,609 L413,631 L681,631 L826,581" stroke="#e6f4ec"/>
<path d="M280,617 L413,645 L681,645 L820,597" stroke="#35a86c"/>
<path d="M281,623 L413,659 L681,659 L815,610" stroke="#e6f4ec"/>
<path d="M282,628 L413,673 L681,673 L809,620" stroke="#35a86c"/>
</g>
<text x="453" y="662" font-family="Liberation Sans" font-size="23.5" font-weight="bold" fill="#fbfdfb" stroke="#5fae84" stroke-width="1.2" paint-order="stroke" textLength="193" lengthAdjust="spacingAndGlyphs">SUMMER STORY</text>
<rect x="217.5" y="163.5" width="672" height="559" fill="none" stroke="#3a3a3a" stroke-width="1"/>
</svg>
<svg class="a" style="left:8px;top:66px" width="10" height="9" viewBox="0 0 10 9"><path d="M1,4.5 L4.5,1.5 L4.5,7.5Z M5,4.5 L8.5,1.5 L8.5,7.5Z" fill="#c4c4c4"/></svg>
<div class="a" style="left:24px;top:83px;width:22px;height:3px;background:repeating-linear-gradient(90deg,#3a3a3a 0 1px,transparent 1px 2px)"></div>
<div class="a" style="left:7px;top:97px;width:28px;height:22px;background:#303030;border-radius:3px"></div>
<svg class="a" style="left:9px;top:97px" width="22" height="22" viewBox="0 0 22 22"><path d="M6,3 L6,18 L10,14 L17,13 Z" fill="none" stroke="#d8d8d8" stroke-width="1.3"/></svg>
<svg class="a" style="left:41px;top:97px" width="22" height="22" viewBox="0 0 22 22"><path d="M5,3 L5,18 L9,14 L16,13 Z" fill="#c4c4c4"/></svg>
<svg class="a" style="left:9px;top:121px" width="22" height="22" viewBox="0 0 22 22"><path d="M4,19 L13,10" stroke="#c4c4c4" stroke-width="2.5"/><path d="M8,5 l1,2 2,0 -2,1 1,2 -2,-1 -2,1 1,-2 -2,-1 2,0z M15,4 l.7,1.5 1.5,0 -1.2,1 .6,1.5 -1.6,-1 -1.4,1 .5,-1.5 -1.2,-1 1.5,0z M16,11 l.5,1 1,0 -.8,.6 .4,1 -1,-.6 -1,.6 .4,-1 -.8,-.6 1,0z" fill="#c4c4c4"/></svg>
<svg class="a" style="left:41px;top:121px" width="22" height="22" viewBox="0 0 22 22"><path d="M9,8 L9,19 L12,16 L17,16Z" fill="#c4c4c4"/><path d="M8,12 C2,12 2,5 8,4 C13,3 16,6 14,9" fill="none" stroke="#c4c4c4" stroke-width="1.3"/></svg>
<svg class="a" style="left:9px;top:145px" width="22" height="22" viewBox="0 0 22 22"><path d="M3,19 L6,11 L12,6 L16,10 L11,16 Z" fill="#c4c4c4"/><path d="M12,5 L15,2 L19,6 L16,9Z" fill="#c4c4c4"/></svg>
<svg class="a" style="left:41px;top:145px" width="22" height="22" viewBox="0 0 22 22"><path d="M5,19 L8,11 L14,6 L18,10 L13,16 Z" fill="#c4c4c4"/><path d="M14,5 L17,2 L21,6 L18,9Z" fill="#c4c4c4"/><path d="M6,4 C2,8 6,12 4,18" fill="none" stroke="#c4c4c4" stroke-width="1.2"/></svg>
<svg class="a" style="left:9px;top:168px" width="22" height="22" viewBox="0 0 22 22"><path d="M3,4 L17,4 L17,8 L16,8 L15,6 L11,6 L11,17 L13,18 L7,18 L9,17 L9,6 L5,6 L4,8 L3,8Z" fill="#c4c4c4"/></svg>
<svg class="a" style="left:41px;top:168px" width="22" height="22" viewBox="0 0 22 22"><path d="M3,19 L18,3" stroke="#c4c4c4" stroke-width="1.6"/></svg>
<svg class="a" style="left:9px;top:192px" width="22" height="22" viewBox="0 0 22 22"><rect x="3.5" y="5.5" width="14" height="12" fill="#6a6a6a" stroke="#c4c4c4" stroke-width="1.3"/></svg>
<svg class="a" style="left:41px;top:192px" width="22" height="22" viewBox="0 0 22 22"><path d="M17,3 L12,12 L9,10 Z" fill="#c4c4c4"/><path d="M9,11 C5,12 6,16 3,19 C8,19 11,16 11,13Z" fill="#c4c4c4"/></svg>
<svg class="a" style="left:9px;top:216px" width="22" height="22" viewBox="0 0 22 22"><circle cx="8" cy="12" r="5.5" fill="#777" stroke="#c4c4c4" stroke-width="1.4"/><path d="M5,19 L17,6" stroke="#c4c4c4" stroke-width="3"/></svg>
<svg class="a" style="left:41px;top:216px" width="22" height="22" viewBox="0 0 22 22"><path d="M4,13 L11,5 L17,10 L10,18Z" fill="#c4c4c4"/><path d="M4,13 L10,18 L8,19 L3,15Z" fill="#fff"/></svg>
<svg class="a" style="left:9px;top:241px" width="22" height="22" viewBox="0 0 22 22"><path d="M6,8 A6.5,6.5 0 1 1 5,15" fill="none" stroke="#c4c4c4" stroke-width="1.4" stroke-dasharray="2,1.5"/><path d="M3,4 L8,8 L3,10Z" fill="#c4c4c4"/></svg>
<svg class="a" style="left:41px;top:241px" width="22" height="22" viewBox="0 0 22 22"><rect x="3.5" y="10.5" width="8" height="8" fill="none" stroke="#c4c4c4" stroke-width="1.3"/><rect x="7.5" y="5.5" width="11" height="9" fill="none" stroke="#c4c4c4" stroke-width="1.3"/><path d="M12,11 L17,6 M14,6 L17,6 L17,9" stroke="#c4c4c4" stroke-width="1.2" fill="none"/></svg>
<svg class="a" style="left:9px;top:264px" width="22" height="22" viewBox="0 0 22 22"><path d="M4,18 C6,10 12,14 10,7 C14,10 18,9 19,14 C16,12 14,16 11,15 C9,17 6,19 4,18Z" fill="#c4c4c4"/></svg>
<svg class="a" style="left:41px;top:264px" width="22" height="22" viewBox="0 0 22 22"><path d="M4,3 L4,16 L8,12 L13,12Z" fill="#c4c4c4"/><rect x="8.5" y="6.5" width="10" height="12" fill="none" stroke="#c4c4c4" stroke-dasharray="2,2"/></svg>
<svg class="a" style="left:9px;top:288px" width="22" height="22" viewBox="0 0 22 22"><circle cx="9" cy="10" r="6" fill="none" stroke="#c4c4c4" stroke-width="1.3"/><path d="M11,9 L11,20 L14,17 L19,17Z" fill="#c4c4c4"/></svg>
<svg class="a" style="left:41px;top:288px" width="22" height="22" viewBox="0 0 22 22"><path d="M4,3 L4,18 L19,18 M4,7 L12,10 M4,12 L12,13 M8,5 L8,18 M12,7 L12,18" stroke="#c4c4c4" stroke-width="1.2" fill="none"/><path d="M12,14 L19,14 L19,18 L12,18Z" fill="#999"/></svg>
<svg class="a" style="left:9px;top:312px" width="22" height="22" viewBox="0 0 22 22"><path d="M3.5,3.5 L17.5,3.5 L17.5,17.5 L3.5,17.5Z M3,10 C8,8 8,4 12,4 M10,17 C10,12 14,10 17,10 M7,17 C7,12 12,7 17,7" stroke="#c4c4c4" stroke-width="1.2" fill="none"/></svg>
<svg class="a" style="left:41px;top:312px" width="22" height="22" viewBox="0 0 22 22"><defs><linearGradient id="tg"><stop offset="0" stop-color="#333"/><stop offset="1" stop-color="#ddd"/></linearGradient></defs><rect x="3" y="3" width="15" height="15" fill="url(#tg)"/></svg>
<svg class="a" style="left:9px;top:336px" width="22" height="22" viewBox="0 0 22 22"><path d="M3,19 L4,16 L12,8 L14,10 L6,18Z" fill="none" stroke="#c4c4c4" stroke-width="1.3"/><path d="M12,6 L16,2 L19,5 L15,9Z" fill="#c4c4c4"/></svg>
<svg class="a" style="left:41px;top:336px" width="22" height="22" viewBox="0 0 22 22"><rect x="3" y="4" width="7" height="7" fill="#c4c4c4"/><circle cx="12" cy="11" r="5" fill="#888" stroke="#c4c4c4"/><circle cx="16" cy="15" r="5" fill="none" stroke="#c4c4c4" stroke-width="1.3"/></svg>
<svg class="a" style="left:9px;top:360px" width="22" height="22" viewBox="0 0 22 22"><rect x="8.5" y="8.5" width="9" height="10" rx="1" fill="none" stroke="#c4c4c4" stroke-width="1.3"/><circle cx="13" cy="13.5" r="2" fill="#c4c4c4"/><rect x="10" y="5" width="6" height="3" fill="#c4c4c4"/><path d="M2,4 h1 M5,4 h1 M2,7 h1 M5,7 h1 M2,10 h1" stroke="#c4c4c4" stroke-width="1.5"/></svg>
<svg class="a" style="left:41px;top:360px" width="22" height="22" viewBox="0 0 22 22"><path d="M3,3 L3,18 L19,18" stroke="#c4c4c4" stroke-width="1.2" fill="none"/><rect x="6" y="10" width="2.5" height="7" fill="#c4c4c4"/><rect x="10" y="6" width="2.5" height="11" fill="#c4c4c4"/><rect x="14" y="9" width="2.5" height="8" fill="#c4c4c4"/></svg>
<svg class="a" style="left:9px;top:384px" width="22" height="22" viewBox="0 0 22 22"><path d="M6,2 L6,15 L19,15 M2,6 L15,6 L15,19" stroke="#c4c4c4" stroke-width="1.2" fill="none"/><rect x="6" y="6" width="9" height="9" fill="#777"/></svg>
<svg class="a" style="left:41px;top:384px" width="22" height="22" viewBox="0 0 22 22"><path d="M3,19 L7,11 L15,3 L18,6 L10,14Z" fill="none" stroke="#c4c4c4" stroke-width="1.4"/></svg>
<svg class="a" style="left:9px;top:408px" width="22" height="22" viewBox="0 0 22 22"><path d="M5,11 L5,6 Q6,5 7,6 L7,10 L7,4 Q8,3 9,4 L9,10 L9,3.5 Q10,2.5 11,3.5 L11,10 L11,5 Q12,4 13,5 L13,13 L15,10 Q17,9 16,12 L12,19 L7,19 Q4,16 5,11Z" fill="#c4c4c4"/></svg>
<svg class="a" style="left:41px;top:408px" width="22" height="22" viewBox="0 0 22 22"><circle cx="9" cy="9" r="5.5" fill="none" stroke="#c4c4c4" stroke-width="1.6"/><path d="M13,13 L18,18" stroke="#c4c4c4" stroke-width="2.2"/></svg>
<svg class="a" style="left:61px;top:114px" width="4" height="4"><path d="M4,0 L4,4 L0,4Z" fill="#c4c4c4"/></svg>
<svg class="a" style="left:29px;top:162px" width="4" height="4"><path d="M4,0 L4,4 L0,4Z" fill="#c4c4c4"/></svg>
<svg class="a" style="left:61px;top:162px" width="4" height="4"><path d="M4,0 L4,4 L0,4Z" fill="#c4c4c4"/></svg>
<svg class="a" style="left:29px;top:185px" width="4" height="4"><path d="M4,0 L4,4 L0,4Z" fill="#c4c4c4"/></svg>
<svg class="a" style="left:61px;top:185px" width="4" height="4"><path d="M4,0 L4,4 L0,4Z" fill="#c4c4c4"/></svg>
<svg class="a" style="left:29px;top:209px" width="4" height="4"><path d="M4,0 L4,4 L0,4Z" fill="#c4c4c4"/></svg>
<svg class="a" style="left:61px;top:209px" width="4" height="4"><path d="M4,0 L4,4 L0,4Z" fill="#c4c4c4"/></svg>
<svg class="a" style="left:29px;top:233px" width="4" height="4"><path d="M4,0 L4,4 L0,4Z" fill="#c4c4c4"/></svg>
<svg class="a" style="left:61px;top:233px" width="4" height="4"><path d="M4,0 L4,4 L0,4Z" fill="#c4c4c4"/></svg>
<svg class="a" style="left:29px;top:258px" width="4" height="4"><path d="M4,0 L4,4 L0,4Z" fill="#c4c4c4"/></svg>
<svg class="a" style="left:61px;top:258px" width="4" height="4"><path d="M4,0 L4,4 L0,4Z" fill="#c4c4c4"/></svg>
<svg class="a" style="left:29px;top:281px" width="4" height="4"><path d="M4,0 L4,4 L0,4Z" fill="#c4c4c4"/></svg>
<svg class="a" style="left:61px;top:281px" width="4" height="4"><path d="M4,0 L4,4 L0,4Z" fill="#c4c4c4"/></svg>
<svg class="a" style="left:29px;top:305px" width="4" height="4"><path d="M4,0 L4,4 L0,4Z" fill="#c4c4c4"/></svg>
<svg class="a" style="left:61px;top:305px" width="4" height="4"><path d="M4,0 L4,4 L0,4Z" fill="#c4c4c4"/></svg>
<svg class="a" style="left:29px;top:353px" width="4" height="4"><path d="M4,0 L4,4 L0,4Z" fill="#c4c4c4"/></svg>
<svg class="a" style="left:29px;top:377px" width="4" height="4"><path d="M4,0 L4,4 L0,4Z" fill="#c4c4c4"/></svg>
<svg class="a" style="left:61px;top:377px" width="4" height="4"><path d="M4,0 L4,4 L0,4Z" fill="#c4c4c4"/></svg>
<svg class="a" style="left:61px;top:401px" width="4" height="4"><path d="M4,0 L4,4 L0,4Z" fill="#c4c4c4"/></svg>
<svg class="a" style="left:29px;top:425px" width="4" height="4"><path d="M4,0 L4,4 L0,4Z" fill="#c4c4c4"/></svg>
<div class="a" style="left:6px;top:434px;width:60px;height:1px;background:#4a4a4a"></div>
<svg class="a" style="left:24px;top:457px" width="36" height="36" viewBox="0 0 36 36"><rect x="0.5" y="0.5" width="35" height="35" fill="#fff" stroke="#222"/><rect x="10.5" y="10.5" width="15" height="15" fill="#4a4a4a" stroke="#222"/><line x1="1" y1="35" x2="35" y2="1" stroke="#d8232a" stroke-width="2.6"/></svg>
<svg class="a" style="left:6px;top:439px" width="36" height="36" viewBox="0 0 36 36"><rect x="0.5" y="0.5" width="35" height="35" fill="#ccffd9" stroke="#222"/><rect x="1.5" y="1.5" width="33" height="33" fill="none" stroke="#fff"/></svg>
<svg class="a" style="left:50px;top:439px" width="14" height="14" viewBox="0 0 14 14"><path d="M3,4 Q9,3 11,10" stroke="#c4c4c4" stroke-width="1.6" fill="none"/><path d="M1,4 L5,1 L5,7Z M11,13 L8,9 L14,9Z" fill="#c4c4c4"/></svg>
<svg class="a" style="left:5px;top:479px" width="13" height="13" viewBox="0 0 13 13"><rect x="3.5" y="3.5" width="9" height="9" fill="#000" stroke="#ddd"/><rect x="0.5" y="0.5" width="8" height="8" fill="#fff" stroke="#111"/></svg>
<div class="a" style="left:6px;top:498px;width:60px;height:1px;background:#4a4a4a"></div>
<div class="a" style="left:5px;top:500px;width:62px;height:20px;background:#4a4a4a;border-radius:2px"></div>
<div class="a" style="left:6px;top:501px;width:20px;height:19px;background:#3a3a3a;border-radius:2px"></div>
<div class="a" style="left:9px;top:503px;width:13px;height:13px;background:#ccffd9;border:1px solid #222"></div>
<div class="a" style="left:29px;top:503px;width:13px;height:13px;background:linear-gradient(90deg,#fff,#111);border:1px solid #222"></div>
<svg class="a" style="left:50px;top:503px" width="14" height="14" viewBox="0 0 14 14"><rect x="0.5" y="0.5" width="13" height="13" fill="#fff" stroke="#222"/><line x1="1" y1="13" x2="13" y2="1" stroke="#e0242a" stroke-width="2.5"/></svg>
<div class="a" style="left:5px;top:523px;width:62px;height:20px;background:#4a4a4a;border-radius:2px"></div>
<div class="a" style="left:6px;top:524px;width:20px;height:19px;background:#333;border-radius:2px"></div>
<svg class="a" style="left:10px;top:527px" width="13" height="13" viewBox="0 0 13 13"><circle cx="6" cy="6" r="4.5" fill="#888" stroke="#c4c4c4" stroke-width="1.2"/><rect x="6" y="6" width="6" height="6" fill="#c4c4c4"/></svg>
<svg class="a" style="left:30px;top:527px" width="13" height="13" viewBox="0 0 13 13"><circle cx="6" cy="6" r="4.5" fill="#888" stroke="#c4c4c4" stroke-width="1.2"/><rect x="6" y="6" width="6" height="6" fill="#c4c4c4"/></svg>
<svg class="a" style="left:50px;top:527px" width="13" height="13" viewBox="0 0 13 13"><circle cx="6" cy="6" r="4.5" fill="#888" stroke="#c4c4c4" stroke-width="1.2"/><rect x="6" y="6" width="6" height="6" fill="#c4c4c4"/></svg>
<svg class="a" style="left:25px;top:549px" width="22" height="18" viewBox="0 0 22 18"><rect x="1.5" y="6.5" width="12" height="10" fill="none" stroke="#c4c4c4" stroke-width="1.2"/><rect x="7.5" y="1.5" width="13" height="10" fill="#777" stroke="#c4c4c4" stroke-width="1.2"/></svg>
<svg class="a" style="left:28px;top:587px" width="16" height="5" viewBox="0 0 16 5"><circle cx="2.5" cy="2.5" r="1.6" fill="#c4c4c4"/><circle cx="8" cy="2.5" r="1.6" fill="#c4c4c4"/><circle cx="13.5" cy="2.5" r="1.6" fill="#c4c4c4"/></svg>
<div class="a" style="left:10px;top:7px;width:16px;height:15px;background:#330000;border-radius:2px;border:1px solid #4a1a00"></div>
<div class="t" style="left:12px;top:9.5px;font-size:9.5px;color:#ff9a00;font-weight:bold">Ai</div>
<svg class="a" style="left:38px;top:6px" width="22" height="18" viewBox="0 0 22 18"><path d="M11,1 L21,9 L18,9 L18,17 L13,17 L13,12 L9,12 L9,17 L4,17 L4,9 L1,9Z" fill="#cfcfcf"/></svg>
<div class="a" style="left:72px;top:6px;width:1px;height:18px;background:#464646"></div>
<div class="a" style="left:83px;top:7px;width:50px;height:16px;background:#3b3b3b;border-radius:2px 2px 0 0"></div>
<div class="t" style="left:89px;top:9px;font-size:12.5px;color:#e6e6e6;">파일(F)</div>
<div class="t" style="left:141px;top:9px;font-size:12.5px;color:#e6e6e6;">편집(E)</div>
<div class="t" style="left:193px;top:9px;font-size:12.5px;color:#e6e6e6;">오브젝트(O)</div>
<div class="t" style="left:273px;top:9px;font-size:12.5px;color:#e6e6e6;">문자(T)</div>
<div class="t" style="left:325px;top:9px;font-size:12.5px;color:#e6e6e6;">선택(S)</div>
<div class="t" style="left:378px;top:9px;font-size:12.5px;color:#e6e6e6;">효과(C)</div>
<div class="t" style="left:432px;top:9px;font-size:12.5px;color:#e6e6e6;">보기(V)</div>
<div class="t" style="left:486px;top:9px;font-size:12.5px;color:#e6e6e6;">윈도우(W)</div>
<div class="t" style="left:556px;top:9px;font-size:12.5px;color:#e6e6e6;">도움말(H)</div>
<div class="a" style="left:622px;top:5px;width:1px;height:20px;background:#464646"></div>
<svg class="a" style="left:634px;top:8px" width="18" height="12" viewBox="0 0 18 12"><rect x="0" y="0" width="7" height="12" fill="#d0d0d0"/><rect x="9" y="0" width="9" height="5" fill="#d0d0d0"/><rect x="9" y="7" width="9" height="5" fill="#d0d0d0"/></svg>
<svg class="a" style="left:658px;top:12px" width="10" height="6" viewBox="0 0 10 6"><path d="M1,1 L5,5 L9,1" stroke="#c8c8c8" stroke-width="1.4" fill="none"/></svg>
<svg class="a" style="left:685px;top:7px" width="19" height="16" viewBox="0 0 19 16"><rect x="0.75" y="0.75" width="17.5" height="14.5" fill="none" stroke="#c8c8c8" stroke-width="1.5"/><path d="M8,5 L8,12 L6,10 L7,14 L13,14 L14,9 L10,8 L10,5Z" fill="#bdbdbd"/></svg>
<div class="a" style="left:1202px;top:5px;width:1px;height:20px;background:#464646"></div>
<div class="t" style="left:1215px;top:6.5px;font-size:13px;color:#e6e6e6;">필수 클래식</div>
<svg class="a" style="left:1288px;top:12px" width="10" height="6" viewBox="0 0 10 6"><path d="M1,1 L5,5 L9,1" stroke="#c8c8c8" stroke-width="1.4" fill="none"/></svg>
<div class="a" style="left:1310px;top:5px;width:1px;height:20px;background:#464646"></div>
<div class="a" style="left:1319px;top:4px;width:185px;height:20px;background:#464646;border:1px solid #3e3e3e;border-radius:3px"></div>
<svg class="a" style="left:1323px;top:8px" width="22" height="14" viewBox="0 0 22 14"><circle cx="5.5" cy="5.5" r="4" stroke="#c8c8c8" stroke-width="1.6" fill="none"/><path d="M8.5,8.5 L12,12" stroke="#c8c8c8" stroke-width="1.8"/><path d="M14,5 L17,8 L20,5" stroke="#c8c8c8" stroke-width="1.2" fill="none"/></svg>
<div class="t" style="left:1345px;top:8px;font-size:11.5px;color:#8c8c8c;">Adobe Stock 검색</div>
<div class="a" style="left:1514px;top:-1px;width:83px;height:19px;border:1px solid #474747;border-radius:0 0 3px 3px"></div>
<div class="a" style="left:1541px;top:0px;width:1px;height:17px;background:#474747"></div>
<div class="a" style="left:1568px;top:0px;width:1px;height:17px;background:#474747"></div>
<div class="a" style="left:1522px;top:11px;width:10px;height:2px;background:#cfcfcf"></div>
<svg class="a" style="left:1549px;top:5px" width="12" height="10" viewBox="0 0 12 10"><rect x="0.75" y="3.75" width="7" height="5.5" fill="none" stroke="#cfcfcf" stroke-width="1.5"/><path d="M3,3 L3,0.75 L10.25,0.75 L10.25,6 L8,6" fill="none" stroke="#cfcfcf" stroke-width="1.5"/></svg>
<svg class="a" style="left:1576px;top:5px" width="11" height="10" viewBox="0 0 11 10"><path d="M1,1 L10,9 M10,1 L1,9" stroke="#cfcfcf" stroke-width="1.8"/></svg>
<div class="a" style="left:4px;top:40px;width:2px;height:15px;background:repeating-linear-gradient(0deg,#3a3a3a 0 1px,transparent 1px 2px)"></div>
<div class="t" style="left:15px;top:41px;font-size:11.5px;color:#d8d8d8;">패스</div>
<div class="a" style="left:423px;top:38px;width:86px;height:19px;background:#e8e8e8"></div>
<div class="a" style="left:428px;top:46px;width:51px;height:3px;background:#000"></div>
<div class="t" style="left:484px;top:41px;font-size:11.5px;color:#333;">기본</div>
<div class="a" style="left:509px;top:38px;width:19px;height:19px;background:#474747;border:1px solid #3e3e3e"></div>
<svg class="a" style="left:513px;top:45px" width="10" height="6" viewBox="0 0 10 6"><path d="M1,1 L5,5 L9,1" stroke="#c8c8c8" stroke-width="1.4" fill="none"/></svg>
<div class="t" style="left:535px;top:41px;font-size:11.5px;color:#d8d8d8;border-bottom:1px dotted #bbb;padding-bottom:1px">불투명도:</div>
<div class="a" style="left:584px;top:38px;width:69px;height:19px;background:#474747;border:1px solid #3e3e3e;border-radius:2px"></div>
<div class="a" style="left:635px;top:38px;width:1px;height:19px;background:#3a3a3a"></div>
<div class="t" style="left:588px;top:41px;font-size:11px;color:#e0e0e0;">100%</div>
<svg class="a" style="left:640px;top:42px" width="6" height="10" viewBox="0 0 6 10"><path d="M1,1 L5,5 L1,9" stroke="#c8c8c8" stroke-width="1.4" fill="none"/></svg>
<div class="t" style="left:659px;top:41px;font-size:11.5px;color:#d8d8d8;">스타일:</div>
<div class="a" style="left:698px;top:38px;width:37px;height:19px;background:#474747;border:1px solid #3e3e3e"></div>
<div class="a" style="left:698px;top:38px;width:19px;height:19px;background:#e8e8e8"></div>
<svg class="a" style="left:721px;top:45px" width="10" height="6" viewBox="0 0 10 6"><path d="M1,1 L5,5 L9,1" stroke="#c8c8c8" stroke-width="1.4" fill="none"/></svg>
<svg class="a" style="left:752px;top:38px" width="18" height="18" viewBox="0 0 18 18"><circle cx="9" cy="9" r="8" fill="#bdbdbd"/><circle cx="9" cy="9" r="4" fill="#8a8a8a"/><path d="M9,1 L9,17 M1,9 L17,9 M3,3 L15,15 M15,3 L3,15" stroke="#8f8f8f" stroke-width="0.8"/></svg>
<div class="a" style="left:780px;top:34px;width:1px;height:26px;background:#4a4a4a"></div>
<svg class="a" style="left:791px;top:39px" width="27" height="17" viewBox="0 0 27 17"><path d="M3,0 L3,4 M0,3 L6,3" stroke="#c8c8c8" stroke-width="1"/><path d="M4.5,4.5 L13,4.5 L16,7.5 L16,15.5 L4.5,15.5Z" fill="#777" stroke="#c8c8c8" stroke-width="1.2"/><path d="M19,9 L22,12 L25,9" stroke="#c8c8c8" stroke-width="1.2" fill="none"/></svg>
<svg class="a" style="left:831px;top:39px" width="18" height="17" viewBox="0 0 18 17"><path d="M1,0 L1,17" stroke="#c8c8c8" stroke-width="1.3"/><rect x="3" y="3" width="8" height="4" fill="#c8c8c8"/><rect x="3" y="9" width="13" height="5" fill="#c8c8c8"/></svg>
<svg class="a" style="left:857px;top:39px" width="18" height="17" viewBox="0 0 18 17"><path d="M8.5,0 L8.5,17" stroke="#c8c8c8" stroke-width="1.3"/><rect x="4" y="3" width="9" height="4" fill="#c8c8c8"/><rect x="2" y="9" width="13" height="5" fill="#c8c8c8"/></svg>
<svg class="a" style="left:885px;top:39px" width="18" height="17" viewBox="0 0 18 17"><path d="M16,0 L16,17" stroke="#c8c8c8" stroke-width="1.3"/><rect x="6" y="3" width="8" height="4" fill="#c8c8c8"/><rect x="1" y="9" width="13" height="5" fill="#c8c8c8"/></svg>
<svg class="a" style="left:915px;top:39px" width="18" height="17" viewBox="0 0 18 17"><path d="M0,1.5 L18,1.5" stroke="#c8c8c8" stroke-width="1.3"/><rect x="3" y="3" width="4" height="13" fill="#c8c8c8"/><rect x="10" y="3" width="5" height="8" fill="#c8c8c8"/></svg>
<svg class="a" style="left:941px;top:39px" width="18" height="17" viewBox="0 0 18 17"><path d="M0,8.5 L18,8.5" stroke="#c8c8c8" stroke-width="1.3"/><rect x="3" y="2" width="4" height="13" fill="#c8c8c8"/><rect x="10" y="4" width="5" height="9" fill="#c8c8c8"/></svg>
<svg class="a" style="left:967px;top:39px" width="18" height="17" viewBox="0 0 18 17"><path d="M0,15.5 L18,15.5" stroke="#c8c8c8" stroke-width="1.3"/><rect x="3" y="2" width="4" height="12" fill="#c8c8c8"/><rect x="10" y="7" width="5" height="7" fill="#c8c8c8"/></svg>
<div class="a" style="left:995px;top:34px;width:1px;height:26px;background:#4a4a4a"></div>
<div class="t" style="left:1003px;top:41px;font-size:11px;color:#e0e0e0;border-bottom:1px dotted #bbb;padding-bottom:1px">변형</div>
<div class="a" style="left:1029px;top:34px;width:1px;height:26px;background:#4a4a4a"></div>
<svg class="a" style="left:1039px;top:39px" width="18" height="17" viewBox="0 0 18 17"><rect x="5" y="5" width="8" height="7" fill="#777" stroke="#c8c8c8" stroke-width="1"/><path d="M1,1 L4,4 M17,1 L14,4 M1,16 L4,13 M17,16 L14,13" stroke="#c8c8c8" stroke-width="1.3"/></svg>
<svg class="a" style="left:1068px;top:38px" width="22" height="19" viewBox="0 0 22 19"><rect x="1.5" y="7.5" width="6" height="6" fill="none" stroke="#c8c8c8"/><rect x="10.5" y="1.5" width="6" height="6" fill="none" stroke="#c8c8c8"/><path d="M8,8 L8,18 L11,15 L15,15Z" fill="#c8c8c8"/></svg>
<svg class="a" style="left:1092px;top:45px" width="10" height="6" viewBox="0 0 10 6"><path d="M1,1 L5,5 L9,1" stroke="#c8c8c8" stroke-width="1.4" fill="none"/></svg>
<div class="a" style="left:1109px;top:34px;width:1px;height:26px;background:#4a4a4a"></div>
<svg class="a" style="left:1119px;top:38px" width="22" height="19" viewBox="0 0 22 19"><rect x="1.5" y="7.5" width="6" height="6" fill="none" stroke="#c8c8c8"/><rect x="10.5" y="1.5" width="6" height="6" fill="none" stroke="#c8c8c8"/><path d="M7,17 L9,12 L16,5 L18,7 L11,14Z" fill="#c8c8c8"/></svg>
<svg class="a" style="left:1146px;top:45px" width="10" height="6" viewBox="0 0 10 6"><path d="M1,1 L5,5 L9,1" stroke="#c8c8c8" stroke-width="1.4" fill="none"/></svg>
<svg class="a" style="left:1495px;top:40px" width="15" height="14" viewBox="0 0 15 14"><rect x="0" y="0" width="5" height="5" fill="#c8c8c8"/><rect x="9" y="0" width="5" height="5" fill="#c8c8c8"/><rect x="0" y="8" width="5" height="5" fill="#c8c8c8"/><rect x="9" y="8" width="5" height="5" fill="#c8c8c8"/><rect x="6" y="0" width="2" height="14" fill="#535353"/></svg>
<svg class="a" style="left:1521px;top:40px" width="16" height="15" viewBox="0 0 16 15"><rect x="0" y="0" width="4" height="4" fill="#c8c8c8"/><rect x="0" y="6" width="4" height="4" fill="#c8c8c8"/><rect x="0" y="11" width="4" height="4" fill="#c8c8c8"/><path d="M7,3 L11,3 Q15,3 15,7 Q15,11 11,11 L7,11" fill="none" stroke="#c8c8c8" stroke-width="2"/></svg>
<svg class="a" style="left:1543px;top:45px" width="10" height="6" viewBox="0 0 10 6"><path d="M1,1 L5,5 L9,1" stroke="#777" stroke-width="1.4" fill="none"/></svg>
<svg class="a" style="left:1569px;top:41px" width="14" height="12" viewBox="0 0 14 12"><rect x="0" y="0" width="2" height="2" fill="#c8c8c8"/><rect x="0" y="5" width="2" height="2" fill="#c8c8c8"/><rect x="0" y="10" width="2" height="2" fill="#c8c8c8"/><rect x="4" y="0.5" width="10" height="1.3" fill="#c8c8c8"/><rect x="4" y="5.5" width="10" height="1.3" fill="#c8c8c8"/><rect x="4" y="10.5" width="10" height="1.3" fill="#c8c8c8"/></svg>
<div class="a" style="left:1097px;top:64px;width:248px;height:790px;background:#535353;"></div>
<div class="a" style="left:1097px;top:64px;width:248px;height:13px;background:#424242;border-top:1px solid #393939;border-bottom:1px solid #393939"></div>
<svg class="a" style="left:1331px;top:67px" width="10" height="8" viewBox="0 0 10 8"><path d="M1,1 L4.5,4 L1,7Z M5.5,1 L9,4 L5.5,7Z" fill="#c8c8c8"/></svg>
<div class="a" style="left:1097px;top:77px;width:248px;height:26px;background:#474747;"></div><div class="a" style="left:1097px;top:77px;width:48px;height:26px;background:#535353;"></div><div class="t" style="left:1113px;top:84px;font-size:12.5px;color:#f0f0f0;">색상</div><div class="a" style="left:1214px;top:77px;width:1px;height:26px;background:#3e3e3e;"></div><div class="t" style="left:1155px;top:84px;font-size:12.5px;color:#a8a8a8;width:59px;overflow:hidden">색상 안내</div><svg class="a" style="left:1330px;top:87px" width="11" height="8" viewBox="0 0 11 8"><rect x="0" y="0.5" width="11" height="1.2" fill="#c8c8c8"/><rect x="0" y="3.5" width="11" height="1.2" fill="#c8c8c8"/><rect x="0" y="6.5" width="11" height="1.2" fill="#c8c8c8"/></svg>
<svg class="a" style="left:1101px;top:84px" width="7" height="12" viewBox="0 0 7 12"><path d="M1,4.5 L3.5,1.5 L6,4.5 M1,7.5 L3.5,10.5 L6,7.5" stroke="#c8c8c8" stroke-width="1.1" fill="none"/></svg>
<svg class="a" style="left:1102px;top:113px" width="40" height="14" viewBox="0 0 40 14"><rect x="0.5" y="0.5" width="13" height="13" fill="#fff" stroke="#333"/><line x1="1" y1="13" x2="13" y2="1" stroke="#e0242a" stroke-width="2"/><rect x="13" y="0.5" width="13" height="13" fill="#000"/><rect x="26" y="0.5" width="13" height="13" fill="#fff" stroke="#333"/></svg>
<div class="t" style="left:1256px;top:116px;font-size:11px;color:#bbb;">#</div>
<div class="a" style="left:1266px;top:111px;width:63px;height:19px;background:#474747;border:1px solid #4c4c4c;border-radius:3px"></div>
<div class="t" style="left:1271px;top:114px;font-size:11.5px;color:#e8e8e8;">ccffd9</div>
<div class="a" style="left:1103px;top:137px;width:226px;height:201px;background:linear-gradient(180deg,#fff 0%,rgba(255,255,255,0) 50%,rgba(0,0,0,0) 50%,#000 100%),linear-gradient(90deg,#f00 0%,#ff0 16.67%,#0f0 33.33%,#0ff 50%,#00f 66.67%,#f0f 83.33%,#f00 100%)"></div>
<div class="a" style="left:1097px;top:343px;width:248px;height:4px;background:#3d3d3d;"></div>
<div class="a" style="left:1097px;top:347px;width:248px;height:26px;background:#474747;"></div><div class="a" style="left:1139px;top:347px;width:1px;height:26px;background:#3e3e3e;"></div><div class="t" style="left:1106px;top:354px;font-size:12.5px;color:#a8a8a8;width:33px;overflow:hidden">심볼</div><div class="a" style="left:1140px;top:347px;width:42px;height:26px;background:#535353;"></div><div class="t" style="left:1149px;top:354px;font-size:12.5px;color:#f0f0f0;">견본</div><svg class="a" style="left:1330px;top:357px" width="11" height="8" viewBox="0 0 11 8"><rect x="0" y="0.5" width="11" height="1.2" fill="#c8c8c8"/><rect x="0" y="3.5" width="11" height="1.2" fill="#c8c8c8"/><rect x="0" y="6.5" width="11" height="1.2" fill="#c8c8c8"/></svg>
<svg class="a" style="left:1103px;top:381px" width="30" height="30" viewBox="0 0 30 30"><rect x="11" y="11" width="18" height="18" fill="#fff" stroke="#222"/><rect x="15" y="15" width="10" height="10" fill="#333"/><line x1="12" y1="28" x2="28" y2="12" stroke="#e0242a" stroke-width="3"/><rect x="0.5" y="0.5" width="19" height="19" fill="#ccffd9" stroke="#ddd"/></svg>
<div class="a" style="left:1292px;top:381px;width:48px;height:22px;background:#474747;border:1px solid #4c4c4c;border-radius:2px"></div>
<div class="a" style="left:1317px;top:382px;width:22px;height:20px;background:#333;border-radius:2px"></div>
<svg class="a" style="left:1297px;top:385px" width="13" height="14" viewBox="0 0 13 14"><rect x="0" y="0" width="13" height="2" fill="#c8c8c8"/><rect x="0" y="4" width="13" height="2" fill="#c8c8c8"/><rect x="0" y="8" width="13" height="2" fill="#c8c8c8"/><rect x="0" y="12" width="13" height="2" fill="#c8c8c8"/></svg>
<svg class="a" style="left:1321px;top:385px" width="14" height="14" viewBox="0 0 14 14"><rect x="1.0" y="1.0" width="3.5" height="3.5" fill="#f0f0f0"/><rect x="1.0" y="5.5" width="3.5" height="3.5" fill="#f0f0f0"/><rect x="1.0" y="10.0" width="3.5" height="3.5" fill="#f0f0f0"/><rect x="5.5" y="1.0" width="3.5" height="3.5" fill="#f0f0f0"/><rect x="5.5" y="5.5" width="3.5" height="3.5" fill="#f0f0f0"/><rect x="5.5" y="10.0" width="3.5" height="3.5" fill="#f0f0f0"/><rect x="10.0" y="1.0" width="3.5" height="3.5" fill="#f0f0f0"/><rect x="10.0" y="5.5" width="3.5" height="3.5" fill="#f0f0f0"/><rect x="10.0" y="10.0" width="3.5" height="3.5" fill="#f0f0f0"/></svg>
<div class="a" style="left:1102px;top:415px;width:238px;height:163px;background:transparent;border:1px solid #5f5f5f"></div>
<svg class="a" style="left:1103px;top:416px" width="14" height="14" viewBox="0 0 14 14"><rect x="0" y="0" width="14" height="14" fill="#fff"/><line x1="0" y1="14" x2="14" y2="0" stroke="#e0242a" stroke-width="2"/></svg>
<svg class="a" style="left:1117px;top:416px" width="14" height="14" viewBox="0 0 14 14"><rect x="0" y="0" width="14" height="14" fill="#fff"/><circle cx="7" cy="7" r="4" fill="none" stroke="#333" stroke-width="0.8"/><path d="M7,1 L7,13 M1,7 L13,7" stroke="#333" stroke-width="0.8"/></svg>
<div class="a" style="left:1131px;top:416px;width:14px;height:14px;background:#ffffff;box-shadow:inset 0 0 0 0.5px rgba(60,60,60,.6)"></div>
<div class="a" style="left:1145px;top:416px;width:14px;height:14px;background:#000000;box-shadow:inset 0 0 0 0.5px rgba(60,60,60,.6)"></div>
<div class="a" style="left:1159px;top:416px;width:14px;height:14px;background:#ff0000;box-shadow:inset 0 0 0 0.5px rgba(60,60,60,.6)"></div>
<div class="a" style="left:1173px;top:416px;width:14px;height:14px;background:#ffff00;box-shadow:inset 0 0 0 0.5px rgba(60,60,60,.6)"></div>
<div class="a" style="left:1187px;top:416px;width:14px;height:14px;background:#00ff00;box-shadow:inset 0 0 0 0.5px rgba(60,60,60,.6)"></div>
<div class="a" style="left:1201px;top:416px;width:14px;height:14px;background:#00ffff;box-shadow:inset 0 0 0 0.5px rgba(60,60,60,.6)"></div>
<div class="a" style="left:1215px;top:416px;width:14px;height:14px;background:#0000ff;box-shadow:inset 0 0 0 0.5px rgba(60,60,60,.6)"></div>
<div class="a" style="left:1229px;top:416px;width:14px;height:14px;background:#ff00ff;box-shadow:inset 0 0 0 0.5px rgba(60,60,60,.6)"></div>
<div class="a" style="left:1243px;top:416px;width:14px;height:14px;background:#c1272d;box-shadow:inset 0 0 0 0.5px rgba(60,60,60,.6)"></div>
<div class="a" style="left:1257px;top:416px;width:14px;height:14px;background:#ed1c24;box-shadow:inset 0 0 0 0.5px rgba(60,60,60,.6)"></div>
<div class="a" style="left:1271px;top:416px;width:14px;height:14px;background:#f15a24;box-shadow:inset 0 0 0 0.5px rgba(60,60,60,.6)"></div>
<div class="a" style="left:1285px;top:416px;width:14px;height:14px;background:#f7931e;box-shadow:inset 0 0 0 0.5px rgba(60,60,60,.6)"></div>
<div class="a" style="left:1299px;top:416px;width:14px;height:14px;background:#fbb03b;box-shadow:inset 0 0 0 0.5px rgba(60,60,60,.6)"></div>
<div class="a" style="left:1313px;top:416px;width:14px;height:14px;background:#fcee21;box-shadow:inset 0 0 0 0.5px rgba(60,60,60,.6)"></div>
<div class="a" style="left:1103px;top:430px;width:14px;height:14px;background:#d9e021;box-shadow:inset 0 0 0 0.5px rgba(60,60,60,.6)"></div>
<div class="a" style="left:1117px;top:430px;width:14px;height:14px;background:#8cc63f;box-shadow:inset 0 0 0 0.5px rgba(60,60,60,.6)"></div>
<div class="a" style="left:1131px;top:430px;width:14px;height:14px;background:#39b54a;box-shadow:inset 0 0 0 0.5px rgba(60,60,60,.6)"></div>
<div class="a" style="left:1145px;top:430px;width:14px;height:14px;background:#009245;box-shadow:inset 0 0 0 0.5px rgba(60,60,60,.6)"></div>
<div class="a" style="left:1159px;top:430px;width:14px;height:14px;background:#006837;box-shadow:inset 0 0 0 0.5px rgba(60,60,60,.6)"></div>
<div class="a" style="left:1173px;top:430px;width:14px;height:14px;background:#22b573;box-shadow:inset 0 0 0 0.5px rgba(60,60,60,.6)"></div>
<div class="a" style="left:1187px;top:430px;width:14px;height:14px;background:#00a99d;box-shadow:inset 0 0 0 0.5px rgba(60,60,60,.6)"></div>
<div class="a" style="left:1201px;top:430px;width:14px;height:14px;background:#29abe2;box-shadow:inset 0 0 0 0.5px rgba(60,60,60,.6)"></div>
<div class="a" style="left:1215px;top:430px;width:14px;height:14px;background:#0071bc;box-shadow:inset 0 0 0 0.5px rgba(60,60,60,.6)"></div>
<div class="a" style="left:1229px;top:430px;width:14px;height:14px;background:#2e3192;box-shadow:inset 0 0 0 0.5px rgba(60,60,60,.6)"></div>
<div class="a" style="left:1243px;top:430px;width:14px;height:14px;background:#1b1464;box-shadow:inset 0 0 0 0.5px rgba(60,60,60,.6)"></div>
<div class="a" style="left:1257px;top:430px;width:14px;height:14px;background:#662d91;box-shadow:inset 0 0 0 0.5px rgba(60,60,60,.6)"></div>
<div class="a" style="left:1271px;top:430px;width:14px;height:14px;background:#93278f;box-shadow:inset 0 0 0 0.5px rgba(60,60,60,.6)"></div>
<div class="a" style="left:1285px;top:430px;width:14px;height:14px;background:#9e005d;box-shadow:inset 0 0 0 0.5px rgba(60,60,60,.6)"></div>
<div class="a" style="left:1299px;top:430px;width:14px;height:14px;background:#d4145a;box-shadow:inset 0 0 0 0.5px rgba(60,60,60,.6)"></div>
<div class="a" style="left:1313px;top:430px;width:14px;height:14px;background:#ed1e79;box-shadow:inset 0 0 0 0.5px rgba(60,60,60,.6)"></div>
<div class="a" style="left:1103px;top:444px;width:14px;height:14px;background:#c7b299;box-shadow:inset 0 0 0 0.5px rgba(60,60,60,.6)"></div>
<div class="a" style="left:1117px;top:444px;width:14px;height:14px;background:#998675;box-shadow:inset 0 0 0 0.5px rgba(60,60,60,.6)"></div>
<div class="a" style="left:1131px;top:444px;width:14px;height:14px;background:#736357;box-shadow:inset 0 0 0 0.5px rgba(60,60,60,.6)"></div>
<div class="a" style="left:1145px;top:444px;width:14px;height:14px;background:#534741;box-shadow:inset 0 0 0 0.5px rgba(60,60,60,.6)"></div>
<div class="a" style="left:1159px;top:444px;width:14px;height:14px;background:#c69c6d;box-shadow:inset 0 0 0 0.5px rgba(60,60,60,.6)"></div>
<div class="a" style="left:1173px;top:444px;width:14px;height:14px;background:#a67c52;box-shadow:inset 0 0 0 0.5px rgba(60,60,60,.6)"></div>
<div class="a" style="left:1187px;top:444px;width:14px;height:14px;background:#8c6239;box-shadow:inset 0 0 0 0.5px rgba(60,60,60,.6)"></div>
<div class="a" style="left:1201px;top:444px;width:14px;height:14px;background:#754c24;box-shadow:inset 0 0 0 0.5px rgba(60,60,60,.6)"></div>
<div class="a" style="left:1215px;top:444px;width:14px;height:14px;background:#603813;box-shadow:inset 0 0 0 0.5px rgba(60,60,60,.6)"></div>
<div class="a" style="left:1229px;top:444px;width:14px;height:14px;background:#42210b;box-shadow:inset 0 0 0 0.5px rgba(60,60,60,.6)"></div>
<div class="a" style="left:1243px;top:444px;width:14px;height:14px;background:linear-gradient(90deg,#fff,#000);"></div>
<div class="a" style="left:1257px;top:444px;width:14px;height:14px;background:linear-gradient(90deg,#f15a24,#fcee21);"></div>
<div class="a" style="left:1271px;top:444px;width:14px;height:14px;background:#4bd4ea;box-shadow:inset 0 0 0 0.5px rgba(60,60,60,.6)"></div>
<div class="a" style="left:1285px;top:444px;width:14px;height:14px;background:repeating-linear-gradient(45deg,#2b73b8 0 2px,#7cc0e8 2px 4px);"></div>
<div class="a" style="left:1299px;top:444px;width:14px;height:14px;background:#62c6d3;box-shadow:inset 0 0 0 0.5px rgba(60,60,60,.6)"></div>
<div class="a" style="left:1313px;top:444px;width:14px;height:14px;background:#8088c9;box-shadow:inset 0 0 0 0.5px rgba(60,60,60,.6)"></div>
<div class="a" style="left:1103px;top:458px;width:14px;height:14px;background:#c3a1d6;box-shadow:inset 0 0 0 0.5px rgba(60,60,60,.6)"></div>
<div class="a" style="left:1117px;top:458px;width:14px;height:14px;background:#000000;box-shadow:inset 0 0 0 0.5px rgba(60,60,60,.6)"></div>
<div class="a" style="left:1131px;top:458px;width:14px;height:14px;background:#1a1a1a;box-shadow:inset 0 0 0 0.5px rgba(60,60,60,.6)"></div>
<div class="a" style="left:1145px;top:458px;width:14px;height:14px;background:#333333;box-shadow:inset 0 0 0 0.5px rgba(60,60,60,.6)"></div>
<div class="a" style="left:1159px;top:458px;width:14px;height:14px;background:#4d4d4d;box-shadow:inset 0 0 0 0.5px rgba(60,60,60,.6)"></div>
<div class="a" style="left:1173px;top:458px;width:14px;height:14px;background:#666666;box-shadow:inset 0 0 0 0.5px rgba(60,60,60,.6)"></div>
<div class="a" style="left:1187px;top:458px;width:14px;height:14px;background:#808080;box-shadow:inset 0 0 0 0.5px rgba(60,60,60,.6)"></div>
<div class="a" style="left:1201px;top:458px;width:14px;height:14px;background:#999999;box-shadow:inset 0 0 0 0.5px rgba(60,60,60,.6)"></div>
<div class="a" style="left:1215px;top:458px;width:14px;height:14px;background:#b3b3b3;box-shadow:inset 0 0 0 0.5px rgba(60,60,60,.6)"></div>
<div class="a" style="left:1229px;top:458px;width:14px;height:14px;background:#cccccc;box-shadow:inset 0 0 0 0.5px rgba(60,60,60,.6)"></div>
<div class="a" style="left:1243px;top:458px;width:14px;height:14px;background:#e6e6e6;box-shadow:inset 0 0 0 0.5px rgba(60,60,60,.6)"></div>
<div class="a" style="left:1257px;top:458px;width:14px;height:14px;background:#f2f2f2;box-shadow:inset 0 0 0 0.5px rgba(60,60,60,.6)"></div>
<svg class="a" style="left:1105px;top:582px" width="14" height="14" viewBox="0 0 14 14"><rect x="1" y="1" width="2" height="11" fill="#c8c8c8"/><rect x="4" y="1" width="2" height="11" fill="#c8c8c8"/><path d="M7,1 L11,11" stroke="#c8c8c8" stroke-width="2"/></svg>
<svg class="a" style="left:1133px;top:582px" width="14" height="14" viewBox="0 0 14 14"><circle cx="6" cy="6" r="4" fill="none" stroke="#c8c8c8" stroke-width="1.5"/><circle cx="10" cy="10" r="2.5" fill="#c8c8c8"/></svg>
<svg class="a" style="left:1160px;top:582px" width="14" height="14" viewBox="0 0 14 14"><rect x="2" y="2" width="9" height="9" fill="none" stroke="#888"/></svg>
<svg class="a" style="left:1201px;top:582px" width="14" height="14" viewBox="0 0 14 14"><rect x="0" y="0" width="3" height="3" fill="#c8c8c8"/><rect x="0" y="4" width="3" height="3" fill="#c8c8c8"/><rect x="0" y="8" width="3" height="3" fill="#c8c8c8"/><rect x="4" y="0" width="3" height="3" fill="#c8c8c8"/><rect x="4" y="4" width="3" height="3" fill="#c8c8c8"/><rect x="4" y="8" width="3" height="3" fill="#c8c8c8"/><rect x="8" y="0" width="3" height="3" fill="#c8c8c8"/><rect x="8" y="4" width="3" height="3" fill="#c8c8c8"/><rect x="8" y="8" width="3" height="3" fill="#c8c8c8"/></svg>
<svg class="a" style="left:1228px;top:582px" width="14" height="14" viewBox="0 0 14 14"><rect x="1" y="1" width="11" height="11" fill="none" stroke="#777"/></svg>
<svg class="a" style="left:1253px;top:582px" width="14" height="14" viewBox="0 0 14 14"><path d="M0,3 L5,3 L6,5 L13,5 L13,12 L0,12Z" fill="#c8c8c8"/></svg>
<svg class="a" style="left:1281px;top:582px" width="14" height="14" viewBox="0 0 14 14"><rect x="0.5" y="0.5" width="12" height="12" fill="none" stroke="#c8c8c8"/><path d="M6.5,3 L6.5,10 M3,6.5 L10,6.5" stroke="#c8c8c8" stroke-width="1.3"/></svg>
<svg class="a" style="left:1306px;top:582px" width="14" height="14" viewBox="0 0 14 14"><path d="M2,3 L11,3 M4,3 L5,12 L9,12 L10,3 M5,3 L5,1 L9,1 L9,3" stroke="#777" fill="none"/></svg>
<div class="a" style="left:1097px;top:598px;width:248px;height:3px;background:#3d3d3d;"></div>
<div class="a" style="left:1097px;top:601px;width:248px;height:26px;background:#474747;"></div><div class="a" style="left:1097px;top:601px;width:42px;height:26px;background:#535353;"></div><div class="t" style="left:1106px;top:608px;font-size:12.5px;color:#f0f0f0;">모양</div><div class="a" style="left:1186px;top:601px;width:1px;height:26px;background:#3e3e3e;"></div><div class="t" style="left:1148px;top:608px;font-size:12.5px;color:#a8a8a8;width:38px;overflow:hidden">그래픽</div><div class="a" style="left:1221px;top:601px;width:1px;height:26px;background:#3e3e3e;"></div><div class="t" style="left:1196px;top:608px;font-size:12.5px;color:#a8a8a8;width:25px;overflow:hidden">문자</div><div class="a" style="left:1256px;top:601px;width:1px;height:26px;background:#3e3e3e;"></div><div class="t" style="left:1231px;top:608px;font-size:12.5px;color:#a8a8a8;width:25px;overflow:hidden">단락</div><div class="a" style="left:1305px;top:601px;width:1px;height:26px;background:#3e3e3e;"></div><div class="t" style="left:1266px;top:608px;font-size:12.5px;color:#a8a8a8;width:39px;overflow:hidden">OpenTy</div><svg class="a" style="left:1330px;top:611px" width="11" height="8" viewBox="0 0 11 8"><rect x="0" y="0.5" width="11" height="1.2" fill="#c8c8c8"/><rect x="0" y="3.5" width="11" height="1.2" fill="#c8c8c8"/><rect x="0" y="6.5" width="11" height="1.2" fill="#c8c8c8"/></svg>
<div class="a" style="left:1103px;top:634px;width:237px;height:205px;background:transparent;border:1px solid #5f5f5f"></div>
<div class="a" style="left:1104px;top:659px;width:235px;height:1px;background:#4a4a4a;"></div>
<div class="a" style="left:1104px;top:684px;width:235px;height:1px;background:#4a4a4a;"></div>
<div class="a" style="left:1104px;top:709px;width:235px;height:1px;background:#4a4a4a;"></div>
<div class="a" style="left:1104px;top:734px;width:235px;height:1px;background:#4a4a4a;"></div>
<div class="a" style="left:1106px;top:638px;width:18px;height:18px;background:#ccffd9;border:1px solid #ddd"></div>
<div class="t" style="left:1153px;top:641px;font-size:11px;color:#e8e8e8;font-weight:bold">패스</div>
<div class="a" style="left:1126px;top:660px;width:1px;height:24px;background:#3a3a3a;"></div>
<svg class="a" style="left:1107px;top:667px" width="14" height="9" viewBox="0 0 14 9"><path d="M1,4.5 Q7,-1.5 13,4.5 Q7,10.5 1,4.5Z" fill="#c8c8c8"/><circle cx="7" cy="4.5" r="2" fill="#535353"/></svg>
<svg class="a" style="left:1133px;top:667px" width="6" height="9" viewBox="0 0 6 9"><path d="M1,1 L5,4.5 L1,8" stroke="#c8c8c8" stroke-width="1.4" fill="none"/></svg>
<div class="t" style="left:1153px;top:665px;font-size:11px;color:#e8e8e8;font-weight:bold;border-bottom:1px dotted #bbb">획:</div>
<svg class="a" style="left:1196px;top:663px" width="17" height="17" viewBox="0 0 17 17"><rect x="0.5" y="0.5" width="16" height="16" fill="#fff" stroke="#111"/><rect x="2.5" y="2.5" width="12" height="12" fill="#fff" stroke="#333"/><line x1="3" y1="14" x2="14" y2="3" stroke="#b0122a" stroke-width="2"/></svg>
<div class="a" style="left:1126px;top:685px;width:1px;height:24px;background:#3a3a3a;"></div>
<svg class="a" style="left:1107px;top:692px" width="14" height="9" viewBox="0 0 14 9"><path d="M1,4.5 Q7,-1.5 13,4.5 Q7,10.5 1,4.5Z" fill="#c8c8c8"/><circle cx="7" cy="4.5" r="2" fill="#535353"/></svg>
<svg class="a" style="left:1133px;top:692px" width="6" height="9" viewBox="0 0 6 9"><path d="M1,1 L5,4.5 L1,8" stroke="#c8c8c8" stroke-width="1.4" fill="none"/></svg>
<div class="t" style="left:1153px;top:690px;font-size:11px;color:#e8e8e8;font-weight:bold;border-bottom:1px dotted #bbb">칠:</div>
<svg class="a" style="left:1196px;top:688px" width="17" height="17" viewBox="0 0 17 17"><rect x="0.5" y="0.5" width="16" height="16" fill="#fff" stroke="#111"/><rect x="2.5" y="2.5" width="12" height="12" fill="#ccffd9" stroke="#333"/></svg>
<div class="a" style="left:1126px;top:710px;width:1px;height:24px;background:#3a3a3a;"></div>
<svg class="a" style="left:1107px;top:717px" width="14" height="9" viewBox="0 0 14 9"><path d="M1,4.5 Q7,-1.5 13,4.5 Q7,10.5 1,4.5Z" fill="#6e6e6e"/><circle cx="7" cy="4.5" r="2" fill="#535353"/></svg>
<div class="t" style="left:1153px;top:715px;font-size:11px;color:#e8e8e8;font-weight:bold"><span style="border-bottom:1px dotted #bbb">불투명도:</span> 초기값</div>
<svg class="a" style="left:1108px;top:842px" width="12" height="12" viewBox="0 0 12 12"><rect x="1" y="1" width="10" height="10" fill="none" stroke="#c8c8c8" stroke-width="1.6"/></svg>
<svg class="a" style="left:1134px;top:842px" width="12" height="12" viewBox="0 0 12 12"><rect x="1" y="1" width="10" height="10" fill="none" stroke="#c8c8c8" stroke-width="1.6"/><rect x="3.5" y="3.5" width="5" height="5" fill="#c8c8c8"/></svg>
<div class="t" style="left:1160px;top:842px;font-size:12.5px;color:#c8c8c8;font-family:Liberation Serif"><i>fx</i></div>
<svg class="a" style="left:1253px;top:842px" width="14" height="12" viewBox="0 0 14 12"><circle cx="6" cy="6" r="5" fill="none" stroke="#c8c8c8" stroke-width="1.6"/><path d="M3,3 L9,9" stroke="#c8c8c8" stroke-width="1.6"/></svg>
<svg class="a" style="left:1281px;top:842px" width="12" height="12" viewBox="0 0 12 12"><rect x="0.5" y="0.5" width="11" height="11" fill="none" stroke="#777"/></svg>
<svg class="a" style="left:1306px;top:842px" width="12" height="12" viewBox="0 0 12 12"><path d="M1,3 L11,3 M3,3 L4,12 L8,12 L9,3" stroke="#777" fill="none"/></svg>
<div class="a" style="left:1349px;top:64px;width:251px;height:790px;background:#535353;"></div>
<div class="a" style="left:1345px;top:64px;width:255px;height:13px;background:#424242;border-top:1px solid #393939;border-bottom:1px solid #393939"></div>
<svg class="a" style="left:1584px;top:67px" width="10" height="8" viewBox="0 0 10 8"><path d="M1,1 L4.5,4 L1,7Z M5.5,1 L9,4 L5.5,7Z" fill="#c8c8c8"/></svg>
<div class="a" style="left:1349px;top:77px;width:251px;height:26px;background:#474747;"></div><div class="a" style="left:1349px;top:77px;width:42px;height:26px;background:#535353;"></div><div class="t" style="left:1358px;top:84px;font-size:12.5px;color:#f0f0f0;">속성</div><div class="a" style="left:1467px;top:77px;width:1px;height:26px;background:#3e3e3e;"></div><div class="t" style="left:1400px;top:84px;font-size:12.5px;color:#a8a8a8;width:67px;overflow:hidden">라이브러리</div><div class="a" style="left:1549px;top:77px;width:1px;height:26px;background:#3e3e3e;"></div><div class="t" style="left:1478px;top:84px;font-size:12.5px;color:#a8a8a8;width:71px;overflow:hidden">이미지 추적</div>
<div class="t" style="left:1359px;top:114px;font-size:11.5px;color:#dedede;">패스</div>
<div class="a" style="left:1353px;top:136px;width:235px;height:2px;background:#474747;"></div>
<div class="t" style="left:1359px;top:151px;font-size:10px;color:#c0c0c0;">Transform</div>
<svg class="a" style="left:1359px;top:181px" width="20" height="20" viewBox="0 0 20 20"><rect x="0.5" y="0.5" width="5" height="5" fill="none" stroke="#c8c8c8"/><rect x="0.5" y="7.5" width="5" height="5" fill="none" stroke="#c8c8c8"/><rect x="0.5" y="14.5" width="5" height="5" fill="none" stroke="#c8c8c8"/><rect x="7.5" y="0.5" width="5" height="5" fill="none" stroke="#c8c8c8"/><rect x="7.5" y="7.5" width="5" height="5" fill="#fff" stroke="#c8c8c8"/><rect x="7.5" y="14.5" width="5" height="5" fill="none" stroke="#c8c8c8"/><rect x="14.5" y="0.5" width="5" height="5" fill="none" stroke="#c8c8c8"/><rect x="14.5" y="7.5" width="5" height="5" fill="none" stroke="#c8c8c8"/><rect x="14.5" y="14.5" width="5" height="5" fill="none" stroke="#c8c8c8"/></svg>
<div class="t" style="left:1389px;top:175px;font-size:11px;color:#c8c8c8;">X:</div>
<div class="a" style="left:1402px;top:168px;width:55px;height:20px;background:#474747;border:1px solid #4c4c4c;border-radius:2px"></div><div class="t" style="left:1406px;top:172px;font-size:11px;color:#e4e4e4;">81.8077 m</div>
<div class="t" style="left:1389px;top:201px;font-size:11px;color:#c8c8c8;">Y:</div>
<div class="a" style="left:1402px;top:194px;width:55px;height:20px;background:#474747;border:1px solid #4c4c4c;border-radius:2px"></div><div class="t" style="left:1406px;top:198px;font-size:11px;color:#e4e4e4;">112.3146</div>
<div class="t" style="left:1473px;top:175px;font-size:11px;color:#c8c8c8;">W:</div>
<div class="a" style="left:1491px;top:168px;width:55px;height:20px;background:#474747;border:1px solid #4c4c4c;border-radius:2px"></div><div class="t" style="left:1495px;top:172px;font-size:11px;color:#e4e4e4;">0.6175 mı</div>
<div class="t" style="left:1473px;top:201px;font-size:11px;color:#c8c8c8;">H:</div>
<div class="a" style="left:1491px;top:194px;width:55px;height:20px;background:#474747;border:1px solid #4c4c4c;border-radius:2px"></div><div class="t" style="left:1495px;top:198px;font-size:11px;color:#e4e4e4;">0.8234 mı</div>
<div class="a" style="left:1557px;top:180px;width:23px;height:24px;background:#3a3a3a;border-radius:3px"></div>
<svg class="a" style="left:1563px;top:184px" width="11" height="16" viewBox="0 0 11 16"><rect x="2" y="1" width="6" height="8" rx="3" fill="none" stroke="#eee" stroke-width="1.6"/><rect x="3" y="7" width="6" height="8" rx="3" fill="none" stroke="#eee" stroke-width="1.6"/></svg>
<svg class="a" style="left:1383px;top:223px" width="16" height="11" viewBox="0 0 16 11"><path d="M1,10 L15,10 M1,10 L10,1" stroke="#c8c8c8" stroke-width="1.2" fill="none"/><path d="M7,5 Q10,7 9,10" stroke="#c8c8c8" fill="none"/></svg>
<div class="a" style="left:1402px;top:220px;width:55px;height:20px;background:#474747;border:1px solid #4c4c4c;border-radius:2px"></div><div class="t" style="left:1406px;top:224px;font-size:11px;color:#e4e4e4;">0°</div>
<div class="a" style="left:1438px;top:221px;width:1px;height:18px;background:#3e3e3e;"></div>
<svg class="a" style="left:1443px;top:228px" width="10" height="6" viewBox="0 0 10 6"><path d="M1,1 L5,5 L9,1" stroke="#c8c8c8" stroke-width="1.4" fill="none"/></svg>
<svg class="a" style="left:1498px;top:224px" width="16" height="12" viewBox="0 0 16 12"><path d="M1,1 L6,6 L1,11Z" fill="none" stroke="#c8c8c8"/><path d="M15,1 L10,6 L15,11Z" fill="#c8c8c8"/><path d="M8,0 L8,12" stroke="#c8c8c8" stroke-dasharray="1.5,1"/></svg>
<svg class="a" style="left:1523px;top:224px" width="14" height="14" viewBox="0 0 14 14"><path d="M1,1 L13,1 L7,6Z" fill="none" stroke="#c8c8c8"/><path d="M1,13 L13,13 L7,8Z" fill="#c8c8c8"/><path d="M0,7 L14,7" stroke="#c8c8c8" stroke-dasharray="1.5,1"/></svg>
<svg class="a" style="left:1565px;top:250px" width="16" height="4" viewBox="0 0 16 4"><circle cx="2" cy="2" r="1.5" fill="#c8c8c8"/><circle cx="8" cy="2" r="1.5" fill="#c8c8c8"/><circle cx="14" cy="2" r="1.5" fill="#c8c8c8"/></svg>
<div class="a" style="left:1353px;top:260px;width:235px;height:2px;background:#474747;"></div>
<div class="t" style="left:1359px;top:277px;font-size:10px;color:#c0c0c0;">Appearance</div>
<div class="a" style="left:1360px;top:302px;width:18px;height:18px;background:#ccffd9;border:1px solid #ddd"></div>
<div class="t" style="left:1389px;top:306px;font-size:10.5px;color:#d4d4d4;">Fill</div>
<svg class="a" style="left:1360px;top:330px" width="18" height="18" viewBox="0 0 18 18"><rect x="0.5" y="0.5" width="17" height="17" fill="#fff" stroke="#ccc"/><rect x="3.5" y="3.5" width="11" height="11" fill="#222" stroke="#fff"/><line x1="1" y1="17" x2="17" y2="1" stroke="#e0242a" stroke-width="2.2"/></svg>
<div class="t" style="left:1389px;top:335px;font-size:10.5px;color:#d4d4d4;border-bottom:1px dotted #bbb">Stroke</div>
<div class="a" style="left:1440px;top:328px;width:68px;height:20px;background:#474747;border:1px solid #4c4c4c;border-radius:2px"></div>
<div class="a" style="left:1456px;top:329px;width:1px;height:18px;background:#3e3e3e;"></div><div class="a" style="left:1490px;top:329px;width:1px;height:18px;background:#3e3e3e;"></div>
<svg class="a" style="left:1443px;top:331px" width="10" height="14" viewBox="0 0 10 14"><path d="M1,5 L5,1 L9,5 M1,9 L5,13 L9,9" stroke="#c8c8c8" stroke-width="1.2" fill="none"/></svg>
<svg class="a" style="left:1494px;top:335px" width="10" height="6" viewBox="0 0 10 6"><path d="M1,1 L5,5 L9,1" stroke="#c8c8c8" stroke-width="1.4" fill="none"/></svg>
<svg class="a" style="left:1360px;top:358px" width="18" height="18" viewBox="0 0 18 18"><rect x="0.5" y="0.5" width="17" height="17" fill="#5a5a5a" stroke="#888"/><path d="M3,3h4v4h-4zM11,3h4v4h-4zM7,7h4v4h-4zM3,11h4v4h-4zM11,11h4v4h-4z" fill="#6e6e6e"/></svg>
<div class="t" style="left:1389px;top:364px;font-size:10.5px;color:#d4d4d4;border-bottom:1px dotted #bbb">Opacity</div>
<div class="a" style="left:1440px;top:357px;width:68px;height:20px;background:#474747;border:1px solid #4c4c4c;border-radius:2px"></div>
<div class="a" style="left:1490px;top:358px;width:1px;height:18px;background:#3e3e3e;"></div>
<div class="t" style="left:1444px;top:361px;font-size:11px;color:#e4e4e4;">100%</div>
<svg class="a" style="left:1496px;top:362px" width="6" height="10" viewBox="0 0 6 10"><path d="M1,1 L5,5 L1,9" stroke="#c8c8c8" stroke-width="1.4" fill="none"/></svg>
<div class="t" style="left:1366px;top:396px;font-size:13px;color:#bdbdbd;font-family:Liberation Serif"><i>fx</i></div>
<svg class="a" style="left:1565px;top:426px" width="16" height="4" viewBox="0 0 16 4"><circle cx="2" cy="2" r="1.5" fill="#c8c8c8"/><circle cx="8" cy="2" r="1.5" fill="#c8c8c8"/><circle cx="14" cy="2" r="1.5" fill="#c8c8c8"/></svg>
<div class="a" style="left:1353px;top:435px;width:235px;height:2px;background:#474747;"></div>
<div class="t" style="left:1359px;top:451px;font-size:10px;color:#c0c0c0;">Align</div>
<svg class="a" style="left:1362px;top:478px" width="28" height="18" viewBox="0 0 28 18"><path d="M3,0 L3,4 M0,3 L6,3" stroke="#c8c8c8" stroke-width="1"/><path d="M4.5,4.5 L13,4.5 L16,7.5 L16,16.5 L4.5,16.5Z" fill="#777" stroke="#c8c8c8" stroke-width="1.2"/><path d="M19,10 L22,13 L25,10" stroke="#c8c8c8" stroke-width="1.2" fill="none"/></svg>
<svg class="a" style="left:1398px;top:479px" width="18" height="17" viewBox="0 0 18 17"><path d="M1,0 L1,17" stroke="#c8c8c8" stroke-width="1.3"/><rect x="3" y="3" width="8" height="4" fill="#c8c8c8"/><rect x="3" y="9" width="13" height="5" fill="#c8c8c8"/></svg>
<svg class="a" style="left:1428px;top:479px" width="18" height="17" viewBox="0 0 18 17"><path d="M8.5,0 L8.5,17" stroke="#c8c8c8" stroke-width="1.3"/><rect x="4" y="3" width="9" height="4" fill="#c8c8c8"/><rect x="2" y="9" width="13" height="5" fill="#c8c8c8"/></svg>
<svg class="a" style="left:1459px;top:479px" width="18" height="17" viewBox="0 0 18 17"><path d="M16,0 L16,17" stroke="#c8c8c8" stroke-width="1.3"/><rect x="6" y="3" width="8" height="4" fill="#c8c8c8"/><rect x="1" y="9" width="13" height="5" fill="#c8c8c8"/></svg>
<svg class="a" style="left:1488px;top:479px" width="18" height="17" viewBox="0 0 18 17"><path d="M0,1.5 L18,1.5" stroke="#c8c8c8" stroke-width="1.3"/><rect x="3" y="3" width="4" height="13" fill="#c8c8c8"/><rect x="10" y="3" width="5" height="8" fill="#c8c8c8"/></svg>
<svg class="a" style="left:1518px;top:479px" width="18" height="17" viewBox="0 0 18 17"><path d="M0,8.5 L18,8.5" stroke="#c8c8c8" stroke-width="1.3"/><rect x="3" y="2" width="4" height="13" fill="#c8c8c8"/><rect x="10" y="4" width="5" height="9" fill="#c8c8c8"/></svg>
<svg class="a" style="left:1548px;top:479px" width="18" height="17" viewBox="0 0 18 17"><path d="M0,15.5 L18,15.5" stroke="#c8c8c8" stroke-width="1.3"/><rect x="3" y="2" width="4" height="12" fill="#c8c8c8"/><rect x="10" y="7" width="5" height="7" fill="#c8c8c8"/></svg>
<svg class="a" style="left:1565px;top:511px" width="16" height="4" viewBox="0 0 16 4"><circle cx="2" cy="2" r="1.5" fill="#c8c8c8"/><circle cx="8" cy="2" r="1.5" fill="#c8c8c8"/><circle cx="14" cy="2" r="1.5" fill="#c8c8c8"/></svg>
<div class="a" style="left:1353px;top:520px;width:235px;height:2px;background:#474747;"></div>
<div class="t" style="left:1359px;top:542px;font-size:10px;color:#c0c0c0;">Quick Actions</div>
<div class="a" style="left:1359px;top:565px;width:108px;height:21px;border:1px solid #6a6a6a;border-radius:3px;color:#e8e8e8;font-size:10.5px;text-align:center;line-height:21px">Offset Path</div>
<div class="a" style="left:1477px;top:565px;width:109px;height:21px;border:1px solid #6a6a6a;border-radius:3px;color:#e8e8e8;font-size:10.5px;text-align:center;line-height:21px">Recolor</div>
<div class="a" style="left:1359px;top:596px;width:227px;height:21px;border:1px solid #6a6a6a;border-radius:3px;color:#e8e8e8;font-size:10.5px;text-align:center;line-height:21px">Align to Pixel Grid</div>
<div class="a" style="left:1359px;top:627px;width:227px;height:21px;border:1px solid #6a6a6a;border-radius:3px;color:#e8e8e8;font-size:10.5px;text-align:center;line-height:21px">Arrange</div>
<div class="a" style="left:1359px;top:658px;width:205px;height:21px;border:1px solid #6a6a6a;border-radius:3px;color:#e8e8e8;font-size:10.5px;text-align:center;line-height:21px">Start Global Edit</div>
<div class="a" style="left:1565px;top:658px;width:21px;height:21px;background:transparent;border:1px solid #6a6a6a;border-radius:3px"></div>
<svg class="a" style="left:1571px;top:666px" width="10" height="6" viewBox="0 0 10 6"><path d="M1,1 L5,5 L9,1" stroke="#c8c8c8" stroke-width="1.4" fill="none"/></svg>
<div class="a" style="left:1349px;top:716px;width:251px;height:2px;background:#3d3d3d;"></div>
<div class="a" style="left:1349px;top:718px;width:251px;height:29px;background:#474747;"></div><div class="a" style="left:1389px;top:718px;width:1px;height:29px;background:#3e3e3e;"></div><div class="t" style="left:1359px;top:725px;font-size:12.5px;color:#a8a8a8;width:30px;overflow:hidden">변형</div><div class="a" style="left:1433px;top:718px;width:1px;height:29px;background:#3e3e3e;"></div><div class="t" style="left:1401px;top:725px;font-size:12.5px;color:#a8a8a8;width:32px;overflow:hidden">정렬</div><div class="a" style="left:1434px;top:718px;width:76px;height:29px;background:#535353;"></div><div class="t" style="left:1442px;top:725px;font-size:12.5px;color:#f0f0f0;">패스파인더</div><svg class="a" style="left:1581px;top:728px" width="11" height="8" viewBox="0 0 11 8"><rect x="0" y="0.5" width="11" height="1.2" fill="#c8c8c8"/><rect x="0" y="3.5" width="11" height="1.2" fill="#c8c8c8"/><rect x="0" y="6.5" width="11" height="1.2" fill="#c8c8c8"/></svg>
<div class="t" style="left:1355px;top:756px;font-size:11px;color:#d8d8d8;">모양 모드:</div>
<svg class="a" style="left:1359px;top:780px" width="16" height="16" viewBox="0 0 16 16"><rect x="0" y="0" width="10" height="10" fill="#cfcfcf"/><rect x="5" y="5" width="10" height="10" fill="#cfcfcf"/></svg>
<svg class="a" style="left:1396px;top:780px" width="16" height="16" viewBox="0 0 16 16"><rect x="0" y="0" width="10" height="10" fill="#cfcfcf"/><rect x="5" y="5" width="10" height="10" fill="#535353" stroke="#cfcfcf"/></svg>
<svg class="a" style="left:1433px;top:780px" width="16" height="16" viewBox="0 0 16 16"><rect x="0.5" y="0.5" width="10" height="10" fill="none" stroke="#cfcfcf"/><rect x="4.5" y="4.5" width="10" height="10" fill="none" stroke="#cfcfcf"/><rect x="5" y="5" width="5" height="5" fill="#cfcfcf"/></svg>
<svg class="a" style="left:1470px;top:780px" width="16" height="16" viewBox="0 0 16 16"><rect x="0" y="0" width="10" height="10" fill="#cfcfcf"/><rect x="5" y="5" width="10" height="10" fill="#cfcfcf"/><rect x="5" y="5" width="5" height="5" fill="#535353"/></svg>
<div class="a" style="left:1503px;top:777px;width:71px;height:21px;background:#4e4e4e;border-radius:2px"></div>
<div class="t" style="left:1529px;top:782px;font-size:10.5px;color:#7a7a7a;">확장</div>
<div class="t" style="left:1355px;top:809px;font-size:11px;color:#d8d8d8;">패스파인더:</div>
<svg class="a" style="left:1362px;top:833px" width="16" height="16" viewBox="0 0 16 16"><rect x="0" y="0" width="10" height="10" fill="#cfcfcf"/><rect x="5" y="5" width="10" height="10" fill="#cfcfcf"/></svg>
<svg class="a" style="left:1399px;top:833px" width="16" height="16" viewBox="0 0 16 16"><rect x="0" y="0" width="10" height="10" fill="#cfcfcf"/><rect x="5" y="5" width="10" height="10" fill="#535353" stroke="#cfcfcf"/></svg>
<svg class="a" style="left:1436px;top:833px" width="16" height="16" viewBox="0 0 16 16"><rect x="0.5" y="0.5" width="10" height="10" fill="none" stroke="#cfcfcf"/><rect x="4.5" y="4.5" width="10" height="10" fill="none" stroke="#cfcfcf"/><rect x="5" y="5" width="5" height="5" fill="#cfcfcf"/></svg>
<svg class="a" style="left:1473px;top:833px" width="16" height="16" viewBox="0 0 16 16"><rect x="0" y="0" width="10" height="10" fill="#cfcfcf"/><rect x="5" y="5" width="10" height="10" fill="#cfcfcf"/><rect x="5" y="5" width="5" height="5" fill="#535353"/></svg>
<svg class="a" style="left:1510px;top:833px" width="16" height="16" viewBox="0 0 16 16"><rect x="0" y="0" width="10" height="10" fill="#cfcfcf"/><rect x="5" y="5" width="10" height="10" fill="#cfcfcf"/></svg>
<svg class="a" style="left:1548px;top:833px" width="16" height="16" viewBox="0 0 16 16"><rect x="0" y="0" width="10" height="10" fill="#cfcfcf"/><rect x="5" y="5" width="10" height="10" fill="#535353" stroke="#cfcfcf"/></svg>
<div class="a" style="left:783px;top:198px;width:282px;height:14px;background:#424242;border-radius:3px 3px 0 0"></div>
<svg class="a" style="left:807px;top:202px" width="10" height="8" viewBox="0 0 10 8"><path d="M1,1 L4.5,4 L1,7Z M5.5,1 L9,4 L5.5,7Z" fill="#c8c8c8"/></svg>
<svg class="a" style="left:1033px;top:202px" width="10" height="8" viewBox="0 0 10 8"><path d="M9,1 L5.5,4 L9,7Z M4.5,1 L1,4 L4.5,7Z" fill="#c8c8c8"/></svg>
<svg class="a" style="left:1052px;top:201px" width="9" height="9" viewBox="0 0 9 9"><path d="M1,1 L8,8 M8,1 L1,8" stroke="#c8c8c8" stroke-width="1.8"/></svg>
<div class="a" style="left:783px;top:212px;width:39px;height:96px;background:#535353;border-left:1px solid #3f3f3f;border-bottom:1px solid #3f3f3f"></div>
<div class="a" style="left:793px;top:216px;width:20px;height:4px;background:repeating-linear-gradient(90deg,#3a3a3a 0 1px,transparent 1px 2px)"></div>
<svg class="a" style="left:795px;top:229px" width="17" height="13" viewBox="0 0 17 13"><rect x="0" y="0" width="17" height="2" fill="#c8c8c8"/><rect x="0" y="5" width="17" height="2.5" fill="#c8c8c8"/><rect x="0" y="10" width="17" height="2.5" fill="#c8c8c8"/></svg>
<div class="a" style="left:795px;top:256px;width:17px;height:13px;background:linear-gradient(90deg,#222,#eee);border:1px solid #ccc"></div>
<svg class="a" style="left:793px;top:282px" width="20" height="19" viewBox="0 0 20 19"><circle cx="7.5" cy="7.5" r="6.5" fill="#aaa"/><circle cx="11.5" cy="11.5" r="6.5" fill="#808080" stroke="#bbb" stroke-width="1.2"/></svg>
<div class="a" style="left:822px;top:212px;width:2px;height:335px;background:#3f3f3f;"></div>
<div class="a" style="left:824px;top:212px;width:241px;height:335px;background:#535353;border-right:1px solid #3f3f3f;border-bottom:1px solid #3f3f3f"></div>
<div class="a" style="left:824px;top:212px;width:240px;height:26px;background:#474747;"></div>
<div class="a" style="left:870px;top:212px;width:1px;height:26px;background:#3e3e3e;"></div>
<div class="t" style="left:834px;top:218px;width:35px;overflow:hidden;font-size:12.5px;color:#a8a8a8">레이어</div>
<div class="a" style="left:937px;top:212px;width:1px;height:26px;background:#3e3e3e;"></div>
<div class="t" style="left:881px;top:218px;width:55px;overflow:hidden;font-size:12.5px;color:#a8a8a8">자산 내보내</div>
<div class="a" style="left:971px;top:212px;width:1px;height:26px;background:#3e3e3e;"></div>
<div class="t" style="left:946px;top:218px;width:24px;overflow:hidden;font-size:12.5px;color:#a8a8a8">대지</div>
<div class="a" style="left:972px;top:212px;width:52px;height:26px;background:#535353;"></div>
<div class="t" style="left:981px;top:218px;font-size:12.5px;color:#f0f0f0">브러쉬</div>
<svg class="a" style="left:1047px;top:221px" width="13" height="10" viewBox="0 0 13 10"><rect x="0" y="0" width="13" height="1.3" fill="#c8c8c8"/><rect x="0" y="4" width="13" height="1.3" fill="#c8c8c8"/><rect x="0" y="8" width="13" height="1.3" fill="#c8c8c8"/></svg>
<div class="a" style="left:828px;top:245px;width:231px;height:274px;background:transparent;border:1px solid #5f5f5f"></div>
<div class="a" style="left:830px;top:246px;width:32px;height:32px;background:#e4e4e4;"></div>
<svg class="a" style="left:830px;top:246px" width="32" height="32" viewBox="0 0 32 32"><circle cx="16" cy="16" r="1.5" fill="#000"/></svg>
<div class="a" style="left:863px;top:246px;width:32px;height:32px;background:#e4e4e4;"></div>
<svg class="a" style="left:863px;top:246px" width="32" height="32" viewBox="0 0 32 32"><circle cx="16" cy="16" r="5.5" fill="#000"/></svg>
<div class="a" style="left:896px;top:246px;width:32px;height:32px;background:#e4e4e4;"></div>
<svg class="a" style="left:896px;top:246px" width="32" height="32" viewBox="0 0 32 32"><ellipse cx="16" cy="16" rx="1.5" ry="1" fill="#000" transform="rotate(-30 16 16)"/></svg>
<div class="a" style="left:929px;top:246px;width:32px;height:32px;background:#e4e4e4;"></div>
<svg class="a" style="left:929px;top:246px" width="32" height="32" viewBox="0 0 32 32"><circle cx="16" cy="16" r="6.5" fill="#000"/></svg>
<div class="a" style="left:830px;top:279px;width:214px;height:32px;background:#e4e4e4;"></div>
<div class="a" style="left:830px;top:312px;width:214px;height:32px;background:#e4e4e4;"></div>
<div class="a" style="left:830px;top:345px;width:214px;height:32px;background:#e4e4e4;"></div>
<div class="a" style="left:830px;top:378px;width:214px;height:32px;background:#e4e4e4;"></div>
<div class="a" style="left:830px;top:411px;width:214px;height:32px;background:#e4e4e4;"></div>
<div class="a" style="left:830px;top:444px;width:214px;height:32px;background:#e4e4e4;"></div>
<div class="a" style="left:830px;top:311px;width:214px;height:1px;background:#555;"></div><div class="a" style="left:830px;top:344px;width:214px;height:1px;background:#555;"></div><div class="a" style="left:830px;top:377px;width:214px;height:1px;background:#555;"></div><div class="a" style="left:830px;top:410px;width:214px;height:1px;background:#555;"></div><div class="a" style="left:830px;top:443px;width:214px;height:1px;background:#555;"></div>
<div class="a" style="left:835px;top:294px;width:179px;height:2px;background:#000;"></div>
<div class="t" style="left:1019px;top:289px;font-size:11px;color:#333;">기본</div>
<svg class="a" style="left:835px;top:320px" width="205" height="14" viewBox="0 0 205 14"><path transform="translate(0,1.75) scale(1,0.75)" d="M2.0,3.7 L6.0,4.0 L10.0,3.0 L14.0,3.1 L18.0,4.2 L22.0,3.2 L26.0,3.5 L30.0,2.9 L34.0,3.8 L38.0,3.4 L42.0,3.4 L46.0,3.9 L50.0,4.2 L54.0,2.7 L58.0,3.6 L62.0,3.3 L66.0,3.0 L70.0,3.4 L74.0,3.6 L78.0,3.3 L82.0,3.5 L86.0,3.3 L90.0,3.0 L94.0,3.3 L98.0,2.4 L102.0,2.2 L106.0,3.1 L110.0,3.3 L114.0,2.8 L118.0,2.3 L122.0,3.0 L126.0,3.3 L130.0,3.4 L134.0,2.8 L138.0,3.0 L142.0,3.3 L146.0,3.2 L150.0,3.4 L154.0,3.4 L158.0,3.7 L162.0,4.0 L166.0,3.6 L170.0,3.8 L170.0,5.5 L166.0,6.1 L162.0,6.6 L158.0,6.4 L154.0,6.3 L150.0,6.6 L146.0,7.3 L142.0,7.6 L138.0,8.1 L134.0,8.0 L130.0,8.6 L126.0,9.1 L122.0,8.3 L118.0,8.0 L114.0,8.5 L110.0,9.7 L106.0,9.3 L102.0,7.9 L98.0,8.9 L94.0,9.0 L90.0,9.0 L86.0,8.7 L82.0,9.6 L78.0,9.7 L74.0,9.6 L70.0,10.1 L66.0,9.5 L62.0,9.2 L58.0,9.5 L54.0,9.0 L50.0,9.6 L46.0,10.2 L42.0,9.7 L38.0,9.8 L34.0,9.7 L30.0,9.2 L26.0,9.9 L22.0,9.6 L18.0,10.3 L14.0,9.5 L10.0,9.1 L6.0,9.7 L2.0,9.6Z" fill="#1a1a1a"/><rect x="200.7" y="4.3" width="1.9" height="1.2" fill="#333"/><rect x="177.3" y="4.6" width="1.7" height="1.2" fill="#333"/><rect x="159.7" y="4.8" width="2.2" height="1.2" fill="#333"/><rect x="158.9" y="4.9" width="2.5" height="1.2" fill="#333"/><rect x="141.7" y="5.8" width="2.5" height="1.2" fill="#333"/><rect x="159.5" y="4.1" width="2.6" height="1.2" fill="#333"/><rect x="155.0" y="3.9" width="1.9" height="1.2" fill="#333"/><rect x="184.0" y="3.5" width="1.6" height="1.2" fill="#333"/><rect x="161.0" y="7.2" width="1.9" height="1.2" fill="#333"/><rect x="193.9" y="3.8" width="1.7" height="1.2" fill="#333"/><rect x="181.0" y="7.4" width="1.9" height="1.2" fill="#333"/><rect x="154.2" y="3.6" width="2.1" height="1.2" fill="#333"/><rect x="152.0" y="7.0" width="2.7" height="1.2" fill="#333"/><rect x="151.6" y="4.4" width="2.6" height="1.2" fill="#333"/><rect x="180.4" y="7.0" width="1.7" height="1.2" fill="#333"/><rect x="148.2" y="4.5" width="2.6" height="1.2" fill="#333"/><rect x="157.1" y="4.7" width="1.8" height="1.2" fill="#333"/><rect x="166.4" y="5.0" width="2.8" height="1.2" fill="#333"/><rect x="149.8" y="3.0" width="2.9" height="1.2" fill="#333"/><rect x="195.4" y="7.9" width="1.9" height="1.2" fill="#333"/><rect x="199.9" y="7.6" width="1.4" height="1.2" fill="#333"/><rect x="187.0" y="7.2" width="2.3" height="1.2" fill="#333"/><rect x="172.7" y="4.4" width="1.7" height="1.2" fill="#333"/><rect x="154.3" y="3.3" width="2.2" height="1.2" fill="#333"/><rect x="158.1" y="7.1" width="1.1" height="1.2" fill="#333"/></svg>
<svg class="a" style="left:836px;top:359px" width="204" height="4" viewBox="0 0 204 4"><path d="M1,2 L203,2" stroke="#7a7a7a" stroke-width="1.6"/></svg>
<svg class="a" style="left:836px;top:392px" width="204" height="4" viewBox="0 0 204 4"><path d="M1,2 L203,2" stroke="#7a7a7a" stroke-width="1.6"/></svg>
<svg class="a" style="left:836px;top:425px" width="204" height="4" viewBox="0 0 204 4"><path d="M1,2 L203,2" stroke="#7a7a7a" stroke-width="1.6"/></svg>
<svg class="a" style="left:830px;top:444px" width="214" height="32" viewBox="0 0 214 32"><rect x="0" y="0" width="32" height="32" fill="#9ab0cc"/><rect x="14" y="14" width="18" height="18" fill="#e4e4e4"/><path d="M14,32 L14,14 L32,14" stroke="#c0cfe0" stroke-width="2" fill="none"/><rect x="36" y="0" width="26" height="22" fill="#9ab0cc"/><path d="M36,15 L62,15" stroke="#c0cfe0" stroke-width="1.5"/><rect x="69" y="0" width="26" height="22" fill="#9ab0cc"/><path d="M69,15 L95,15" stroke="#c0cfe0" stroke-width="1.5"/><rect x="99" y="0" width="22" height="22" fill="#9ab0cc"/><path d="M99,15 L113,15 L113,0" stroke="#c0cfe0" stroke-width="1.5" fill="none"/><path d="M32,0 L32,4 M32,28 L32,32" stroke="#111" stroke-width="1"/><path d="M65,0 L65,4 M65,28 L65,32" stroke="#111" stroke-width="1"/><path d="M98,0 L98,4 M98,28 L98,32" stroke="#111" stroke-width="1"/><path d="M131,0 L131,4 M131,28 L131,32" stroke="#111" stroke-width="1"/><path d="M164,0 L164,4 M164,28 L164,32" stroke="#111" stroke-width="1"/><path d="M197,0 L197,4 M197,28 L197,32" stroke="#111" stroke-width="1"/><path d="M0,0.5 L214,0.5" stroke="#222"/></svg>
<svg class="a" style="left:834px;top:523px" width="16" height="13" viewBox="0 0 16 13"><rect x="1" y="1" width="2" height="10" fill="#c8c8c8"/><rect x="4" y="1" width="2" height="10" fill="#c8c8c8"/><path d="M7,1 L10,11" stroke="#c8c8c8" stroke-width="2"/><path d="M12,11 L14,11 L13,12.5Z" fill="#c8c8c8"/></svg>
<svg class="a" style="left:860px;top:522px" width="18" height="15" viewBox="0 0 18 15"><path d="M0.5,3 L5,3 L6,5 L11,5 L11,13 L0.5,13Z" fill="#999" stroke="#c8c8c8"/><circle cx="11" cy="10" r="4" fill="#535353" stroke="#c8c8c8" stroke-width="1.3"/><circle cx="14" cy="10" r="3" fill="none" stroke="#c8c8c8" stroke-width="1.1"/></svg>
<svg class="a" style="left:945px;top:523px" width="14" height="13" viewBox="0 0 14 13"><path d="M1,1 L13,12 M12,1 L2,12" stroke="#6e6e6e" stroke-width="2"/></svg>
<svg class="a" style="left:972px;top:523px" width="13" height="13" viewBox="0 0 13 13"><rect x="0.5" y="0.5" width="12" height="12" fill="none" stroke="#6e6e6e"/><path d="M3,4h7M3,6.5h7M3,9h7" stroke="#6e6e6e"/></svg>
<svg class="a" style="left:999px;top:523px" width="13" height="13" viewBox="0 0 13 13"><rect x="0.5" y="0.5" width="12" height="12" fill="none" stroke="#c8c8c8"/><path d="M6.5,3 L6.5,10 M3,6.5 L10,6.5" stroke="#c8c8c8" stroke-width="1.3"/></svg>
<svg class="a" style="left:1024px;top:523px" width="12" height="13" viewBox="0 0 12 13"><path d="M1,3 L11,3 M3,3 L4,12 L8,12 L9,3 M4,3 L4,1 L8,1 L8,3" stroke="#6e6e6e" fill="none"/></svg>
<div class="a" style="left:824px;top:539px;width:240px;height:8px;background:#424242;"></div>
<div class="a" style="left:932px;top:541px;width:22px;height:4px;background:repeating-linear-gradient(90deg,#2e2e2e 0 1px,transparent 1px 2px)"></div>
<div class="menu" style="left:82px;top:23px;width:335px;height:583px"></div>
<div class="a hl" style="left:85px;top:377px;width:326px;height:22px"></div>
<div class="t" style="left:117px;top:30.0px;font-size:12.5px;color:#000">새로 만들기(N)...</div>
<div class="t" style="right:1204.5px;top:30.0px;font-size:12.5px;color:#000">Ctrl+N</div>
<div class="t" style="left:117px;top:52.1px;font-size:12.5px;color:#000">템플릿으로 새로 만들기(T)...</div>
<div class="t" style="right:1204.5px;top:52.1px;font-size:12.5px;color:#000">Shift+Ctrl+N</div>
<div class="t" style="left:117px;top:74.3px;font-size:12.5px;color:#000">열기(O)...</div>
<div class="t" style="right:1204.5px;top:74.3px;font-size:12.5px;color:#000">Ctrl+O</div>
<div class="t" style="left:117px;top:96.2px;font-size:12.5px;color:#000">최근 파일 열기(F)</div>
<svg class="a" style="left:400px;top:98px" width="6" height="9" viewBox="0 0 6 9"><path d="M1,1 L5,4.5 L1,8" stroke="#333" stroke-width="1.1" fill="none"/></svg>
<div class="t" style="left:117px;top:118.1px;font-size:12.5px;color:#000">Bridge에서 찾아보기...</div>
<div class="t" style="right:1204.5px;top:118.1px;font-size:12.5px;color:#000">Alt+Ctrl+O</div>
<div class="t" style="left:117px;top:147.2px;font-size:12.5px;color:#000">닫기(C)</div>
<div class="t" style="right:1204.5px;top:147.2px;font-size:12.5px;color:#000">Ctrl+W</div>
<div class="t" style="left:117px;top:169.0px;font-size:12.5px;color:#000">저장(S)</div>
<div class="t" style="right:1204.5px;top:169.0px;font-size:12.5px;color:#000">Ctrl+S</div>
<div class="t" style="left:117px;top:190.9px;font-size:12.5px;color:#000">다른 이름으로 저장(A)...</div>
<div class="t" style="right:1204.5px;top:190.9px;font-size:12.5px;color:#000">Shift+Ctrl+S</div>
<div class="t" style="left:117px;top:212.9px;font-size:12.5px;color:#000">사본 저장(Y)...</div>
<div class="t" style="right:1204.5px;top:212.9px;font-size:12.5px;color:#000">Alt+Ctrl+S</div>
<div class="t" style="left:117px;top:234.8px;font-size:12.5px;color:#000">템플릿으로 저장...</div>
<div class="t" style="left:117px;top:256.8px;font-size:12.5px;color:#8d8d8d">선택 분할 영역 저장...</div>
<div class="t" style="left:117px;top:278.5px;font-size:12.5px;color:#000">버전 내역</div>
<div class="t" style="left:117px;top:300.5px;font-size:12.5px;color:#000">복귀(V)</div>
<div class="t" style="right:1204.5px;top:300.5px;font-size:12.5px;color:#000">F12</div>
<div class="t" style="left:117px;top:330.2px;font-size:12.5px;color:#000">Adobe Stock 검색...</div>
<div class="t" style="left:117px;top:352.0px;font-size:12.5px;color:#000">가져오기(L)...</div>
<div class="t" style="right:1204.5px;top:352.0px;font-size:12.5px;color:#000">Shift+Ctrl+P</div>
<div class="t" style="left:117px;top:381.1px;font-size:12.5px;color:#000">내보내기(E)</div>
<svg class="a" style="left:400px;top:383px" width="6" height="9" viewBox="0 0 6 9"><path d="M1,1 L5,4.5 L1,8" stroke="#333" stroke-width="1.1" fill="none"/></svg>
<div class="t" style="left:117px;top:403.1px;font-size:12.5px;color:#000">선택 항목 내보내기...</div>
<div class="t" style="left:117px;top:431.5px;font-size:12.5px;color:#8d8d8d">패키지(G)...</div>
<div class="t" style="right:1204.5px;top:431.5px;font-size:12.5px;color:#8d8d8d">Alt+Shift+Ctrl+P</div>
<div class="t" style="left:117px;top:453.5px;font-size:12.5px;color:#000">스크립트(R)</div>
<svg class="a" style="left:400px;top:456px" width="6" height="9" viewBox="0 0 6 9"><path d="M1,1 L5,4.5 L1,8" stroke="#333" stroke-width="1.1" fill="none"/></svg>
<div class="t" style="left:117px;top:483.0px;font-size:12.5px;color:#000">문서 설정(D)...</div>
<div class="t" style="right:1204.5px;top:483.0px;font-size:12.5px;color:#000">Alt+Ctrl+P</div>
<div class="t" style="left:117px;top:505.1px;font-size:12.5px;color:#000">문서 색상 모드(M)</div>
<svg class="a" style="left:400px;top:507px" width="6" height="9" viewBox="0 0 6 9"><path d="M1,1 L5,4.5 L1,8" stroke="#333" stroke-width="1.1" fill="none"/></svg>
<div class="t" style="left:117px;top:526.9px;font-size:12.5px;color:#000">파일 정보(I)...</div>
<div class="t" style="right:1204.5px;top:526.9px;font-size:12.5px;color:#000">Alt+Shift+Ctrl+I</div>
<div class="t" style="left:117px;top:555.5px;font-size:12.5px;color:#000">인쇄(P)...</div>
<div class="t" style="right:1204.5px;top:555.5px;font-size:12.5px;color:#000">Ctrl+P</div>
<div class="t" style="left:117px;top:584.8px;font-size:12.5px;color:#000">종료(X)</div>
<div class="t" style="right:1204.5px;top:584.8px;font-size:12.5px;color:#000">Ctrl+Q</div>
<div class="a" style="left:113px;top:139px;width:300px;height:1px;background:#d6d6d6"></div>
<div class="a" style="left:113px;top:322px;width:300px;height:1px;background:#d6d6d6"></div>
<div class="a" style="left:113px;top:373px;width:300px;height:1px;background:#d6d6d6"></div>
<div class="a" style="left:113px;top:424px;width:300px;height:1px;background:#d6d6d6"></div>
<div class="a" style="left:113px;top:475px;width:300px;height:1px;background:#d6d6d6"></div>
<div class="a" style="left:113px;top:548px;width:300px;height:1px;background:#d6d6d6"></div>
<div class="a" style="left:113px;top:577px;width:300px;height:1px;background:#d6d6d6"></div>
<div class="menu" style="left:411px;top:374px;width:313px;height:71px"></div>
<div class="a hl" style="left:414px;top:377px;width:307px;height:22px"></div>
<div class="t" style="left:446px;top:381.1px;font-size:12.5px;color:#000">화면에 맞게 내보내기...</div>
<div class="t" style="right:897.0px;top:381.1px;font-size:12.5px;color:#000">Alt+Ctrl+E</div>
<div class="t" style="left:446px;top:403.1px;font-size:12.5px;color:#000">내보내기 형식...</div>
<div class="t" style="left:446px;top:425.1px;font-size:12.5px;color:#000">웹용으로 저장(레거시)...</div>
<div class="t" style="right:897.0px;top:425.1px;font-size:12.5px;color:#000">Alt+Shift+Ctrl+S</div>
</body></html>
